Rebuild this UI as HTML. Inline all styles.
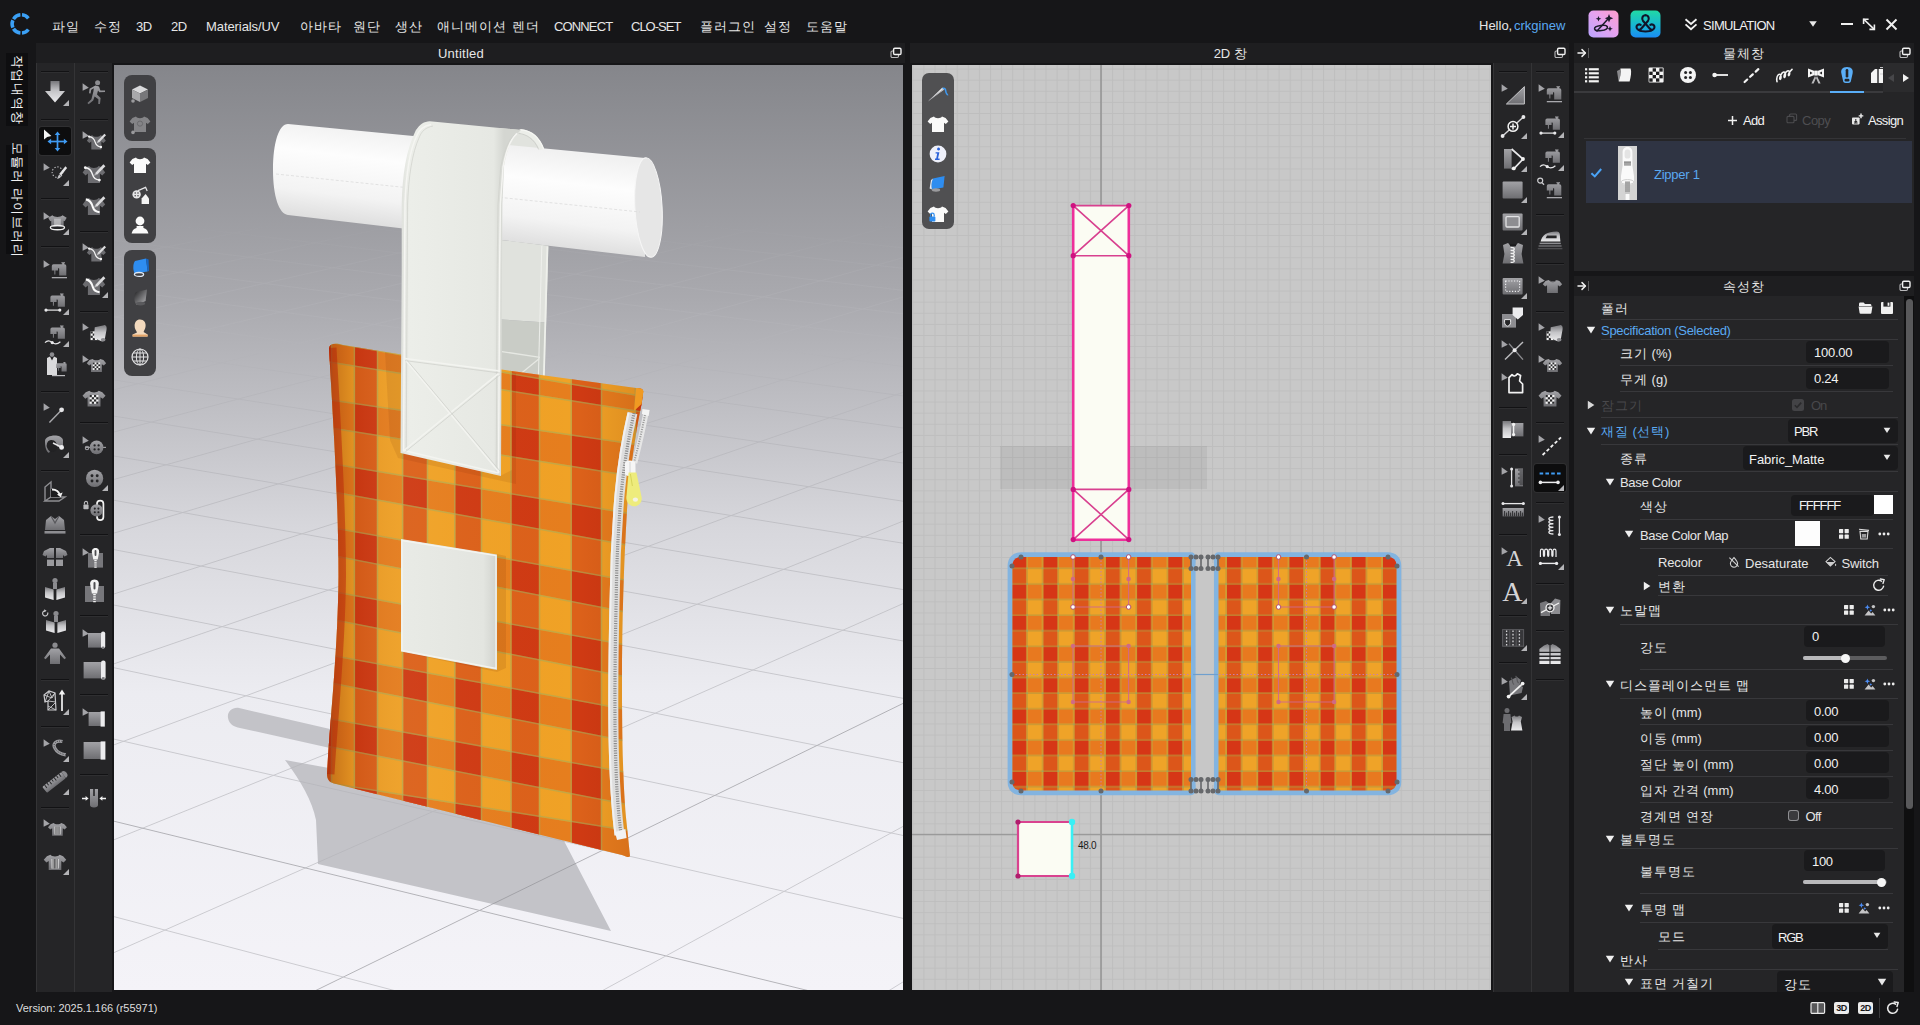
<!DOCTYPE html>
<html lang="ko"><head><meta charset="utf-8"><title>CLO</title>
<style>
html,body{margin:0;padding:0;background:#161618;overflow:hidden}
body{width:1920px;height:1025px;position:relative;overflow:hidden;font-family:"Liberation Sans",sans-serif;font-size:13px;color:#e6e6e6}
.t{position:absolute;white-space:nowrap;font-family:"Liberation Sans",sans-serif}
svg{display:block;overflow:hidden}
</style></head>
<body>
<svg width="0" height="0" style="position:absolute"><defs>
<linearGradient id="gI" x1="0" y1="0" x2="0" y2="1"><stop offset="0" stop-color="#a2a2a6"/><stop offset="1" stop-color="#6e6e72"/></linearGradient>
<linearGradient id="gW" x1="0" y1="0" x2="0" y2="1"><stop offset="0" stop-color="#77777b"/><stop offset=".45" stop-color="#c4c4c7"/><stop offset="1" stop-color="#ececee"/></linearGradient>
</defs></svg>
<!-- top bar, titles, status -->
<svg style="position:absolute;left:8px;top:11px" width="26" height="26" viewBox="0 0 26 26"><g fill="none" stroke="#3ba0f5" stroke-width="3.5"><path d="M20.37 7.30 A9.1 9.1 0 0 0 13.99 3.83"/><path d="M12.41 3.83 A9.1 9.1 0 0 0 5.48 8.08"/><path d="M4.89 9.20 A9.1 9.1 0 0 0 4.89 16.60"/><path d="M5.48 17.72 A9.1 9.1 0 0 0 12.41 21.97"/><path d="M13.99 21.97 A9.1 9.1 0 0 0 20.37 18.50"/></g></svg>
<span class="t" style="top:17.0px;line-height:19px;font-size:13px;color:#e6e6e6;left:52px;"><span style="letter-spacing:1.00px">파일</span></span>
<span class="t" style="top:17.0px;line-height:19px;font-size:13px;color:#e6e6e6;left:94px;"><span style="letter-spacing:1.00px">수정</span></span>
<span class="t" style="top:17.0px;line-height:19px;font-size:13px;color:#e6e6e6;left:136px;letter-spacing:-0.50px;">3D</span>
<span class="t" style="top:17.0px;line-height:19px;font-size:13px;color:#e6e6e6;left:171px;letter-spacing:-0.50px;">2D</span>
<span class="t" style="top:17.0px;line-height:19px;font-size:13px;color:#e6e6e6;left:206px;letter-spacing:-0.08px;">Materials/UV</span>
<span class="t" style="top:17.0px;line-height:19px;font-size:13px;color:#e6e6e6;left:300px;"><span style="letter-spacing:1.00px">아바타</span></span>
<span class="t" style="top:17.0px;line-height:19px;font-size:13px;color:#e6e6e6;left:353px;"><span style="letter-spacing:1.00px">원단</span></span>
<span class="t" style="top:17.0px;line-height:19px;font-size:13px;color:#e6e6e6;left:395px;"><span style="letter-spacing:1.00px">생산</span></span>
<span class="t" style="top:17.0px;line-height:19px;font-size:13px;color:#e6e6e6;left:437px;"><span style="letter-spacing:1.00px">애니메이션</span></span>
<span class="t" style="top:17.0px;line-height:19px;font-size:13px;color:#e6e6e6;left:512px;"><span style="letter-spacing:1.00px">렌더</span></span>
<span class="t" style="top:17.0px;line-height:19px;font-size:13px;color:#e6e6e6;left:554px;letter-spacing:-0.86px;">CONNECT</span>
<span class="t" style="top:17.0px;line-height:19px;font-size:13px;color:#e6e6e6;left:631px;letter-spacing:-1.00px;">CLO-SET</span>
<span class="t" style="top:17.0px;line-height:19px;font-size:13px;color:#e6e6e6;left:700px;"><span style="letter-spacing:1.00px">플러그인</span></span>
<span class="t" style="top:17.0px;line-height:19px;font-size:13px;color:#e6e6e6;left:764px;"><span style="letter-spacing:1.00px">설정</span></span>
<span class="t" style="top:17.0px;line-height:19px;font-size:13px;color:#e6e6e6;left:806px;"><span style="letter-spacing:1.00px">도움말</span></span>
<span class="t" style="top:16.0px;line-height:19px;font-size:13px;color:#e6e6e6;left:1479px;">Hello,</span>
<span class="t" style="top:16.0px;line-height:19px;font-size:13px;color:#5aa9f2;left:1514px;">crkginew</span>
<svg style="position:absolute;left:1588px;top:10px" width="31" height="28" viewBox="0 0 31 28">
<defs><linearGradient id="gA" x1="0" y1="1" x2="1" y2="0"><stop offset="0" stop-color="#b9a4ff"/><stop offset=".55" stop-color="#e7a2ee"/><stop offset="1" stop-color="#ff9ecb"/></linearGradient></defs>
<rect x=".5" y=".5" width="30" height="27" rx="5" fill="url(#gA)"/>
<g stroke="#1b1b2a" stroke-width="1.5" fill="none" stroke-linecap="round">
<path d="M9 21 L19.5 9.5"/><ellipse cx="13" cy="18" rx="6.5" ry="2.6" transform="rotate(-8 13 18)"/></g>
<g fill="#1b1b2a"><path d="M21 4 l1.2 3 3 1.2 -3 1.2 -1.2 3 -1.2 -3 -3 -1.2 3 -1.2z"/><path d="M10.5 6 l.8 2 2 .8 -2 .8 -.8 2 -.8 -2 -2 -.8 2 -.8z"/><path d="M22 16 l.8 2 2 .8 -2 .8 -.8 2 -.8 -2 -2 -.8 2 -.8z"/></g></svg>
<svg style="position:absolute;left:1630px;top:10px" width="31" height="28" viewBox="0 0 31 28">
<defs><linearGradient id="gB" x1="0" y1="0" x2="0" y2="1"><stop offset="0" stop-color="#21d9a4"/><stop offset=".55" stop-color="#17b6d2"/><stop offset="1" stop-color="#1b8bf4"/></linearGradient></defs>
<rect x=".5" y=".5" width="30" height="27" rx="5" fill="url(#gB)"/>
<g stroke="#10142a" stroke-width="2.1" fill="none" stroke-linecap="round" stroke-linejoin="round">
<path d="M15.5 5.2 c-3.2 0 -4.2 3.6 -2.4 5.8 l6.8 7.8 c1.6 1.9 4.6 .9 4.6 -1.7 c0 -2.3 -2.4 -3.3 -4.2 -2.3"/>
<path d="M15.5 5.2 c3.2 0 4.2 3.6 2.4 5.8 l-6.8 7.8 c-1.6 1.9 -4.6 .9 -4.6 -1.7 c0 -2.3 2.4 -3.3 4.2 -2.3"/>
<path d="M9.2 20.3 c2 1.6 10.6 1.6 12.6 0"/></g></svg>
<svg style="position:absolute;left:1683px;top:16px" width="16" height="16" viewBox="0 0 16 16"><g fill="none" stroke="#f2f2f2" stroke-width="1.8" stroke-linejoin="miter"><path d="M2.5 3.2 L8 8 L13.5 3.2"/><path d="M2.5 8.4 L8 13.2 L13.5 8.4"/></g></svg>
<span class="t" style="top:16.0px;line-height:19px;font-size:13px;color:#f0f0f0;left:1703px;letter-spacing:-0.70px;">SIMULATION</span>
<svg style="position:absolute;left:1808px;top:20px" width="10" height="8" viewBox="0 0 10 8"><path d="M1.2 1.2h7.6L5 6.8z" fill="#e8e8e8"/></svg>
<div style="position:absolute;left:1841px;top:23px;width:12px;height:2px;background:#f0f0f0"></div>
<svg style="position:absolute;left:1861px;top:17px" width="16" height="15" viewBox="0 0 16 15"><g stroke="#f0f0f0" stroke-width="1.6" fill="none" stroke-linecap="square"><path d="M3 2.5 L13 12"/><path d="M2.6 6.2 V2.2 H6.8"/><path d="M13.4 8.2 V12.4 H9.2"/></g></svg>
<svg style="position:absolute;left:1885px;top:18px" width="13" height="13" viewBox="0 0 13 13"><g stroke="#f0f0f0" stroke-width="1.9" stroke-linecap="butt"><path d="M1.5 1.5 L11.5 11.5"/><path d="M11.5 1.5 L1.5 11.5"/></g></svg>
<div style="position:absolute;left:6px;top:53px;width:22px;height:73px;background:#0e0e10;"></div>
<div style="position:absolute;left:6px;top:145px;width:22px;height:109px;background:#0e0e10;"></div>
<span class="t" style="left:17px;top:89.5px;font-size:13px;letter-spacing:1px;line-height:16px;transform:translate(-50%,-50%) rotate(90deg);color:#f2f2f2">작업내역창</span>
<span class="t" style="left:17px;top:199.5px;font-size:13px;letter-spacing:1px;line-height:16px;transform:translate(-50%,-50%) rotate(90deg);color:#f2f2f2">모듈러 라이브러리</span>
<div style="position:absolute;left:36px;top:43px;width:869px;height:20px;background:#1e1e20;"></div>
<span class="t" style="top:44.0px;line-height:19px;font-size:13px;color:#e6e6e6;left:361px;width:200px;text-align:center;letter-spacing:0.25px;">Untitled</span>
<div style="position:absolute;left:910px;top:43px;width:659px;height:20px;background:#1e1e20;"></div>
<span class="t" style="top:44.0px;line-height:19px;font-size:13px;color:#e6e6e6;left:1130.5px;width:200px;text-align:center;">2D <span style="letter-spacing:0.50px">창</span></span>
<div style="position:absolute;left:1574px;top:43px;width:340px;height:20px;background:#1e1e20;"></div>
<span class="t" style="top:44.0px;line-height:19px;font-size:13px;color:#e6e6e6;left:1643.5px;width:200px;text-align:center;"><span style="letter-spacing:1.00px">물체창</span></span>
<div style="position:absolute;left:1574px;top:276px;width:340px;height:20px;background:#1e1e20;"></div>
<span class="t" style="top:276.5px;line-height:19px;font-size:13px;color:#e6e6e6;left:1643.5px;width:200px;text-align:center;"><span style="letter-spacing:1.00px">속성창</span></span>
<svg style="position:absolute;left:890px;top:47px" width="12" height="12" viewBox="0 0 12 12"><g fill="none" stroke-linejoin="round"><rect x="1" y="4" width="7.5" height="6.5" rx="1.2" stroke="#b9b9bb" stroke-width="1.1"/><rect x="3.6" y="1.3" width="7.4" height="6.2" rx="1.2" fill="#1e1e20" stroke="#f2f2f2" stroke-width="1.4"/></g></svg>
<svg style="position:absolute;left:1554px;top:47px" width="12" height="12" viewBox="0 0 12 12"><g fill="none" stroke-linejoin="round"><rect x="1" y="4" width="7.5" height="6.5" rx="1.2" stroke="#b9b9bb" stroke-width="1.1"/><rect x="3.6" y="1.3" width="7.4" height="6.2" rx="1.2" fill="#1e1e20" stroke="#f2f2f2" stroke-width="1.4"/></g></svg>
<svg style="position:absolute;left:1899px;top:47px" width="12" height="12" viewBox="0 0 12 12"><g fill="none" stroke-linejoin="round"><rect x="1" y="4" width="7.5" height="6.5" rx="1.2" stroke="#b9b9bb" stroke-width="1.1"/><rect x="3.6" y="1.3" width="7.4" height="6.2" rx="1.2" fill="#1e1e20" stroke="#f2f2f2" stroke-width="1.4"/></g></svg>
<svg style="position:absolute;left:1899px;top:280px" width="12" height="12" viewBox="0 0 12 12"><g fill="none" stroke-linejoin="round"><rect x="1" y="4" width="7.5" height="6.5" rx="1.2" stroke="#b9b9bb" stroke-width="1.1"/><rect x="3.6" y="1.3" width="7.4" height="6.2" rx="1.2" fill="#1e1e20" stroke="#f2f2f2" stroke-width="1.4"/></g></svg>
<svg style="position:absolute;left:1577px;top:47px" width="14" height="12" viewBox="0 0 14 12"><g stroke="#f2f2f2" stroke-width="1.5" fill="none" stroke-linecap="round" stroke-linejoin="round"><path d="M1 6 H8"/><path d="M5 2.6 L8.4 6 L5 9.4"/></g><path d="M11.5 1 V11" stroke="#5a5a5c" stroke-width="1"/></svg>
<svg style="position:absolute;left:1577px;top:280px" width="14" height="12" viewBox="0 0 14 12"><g stroke="#f2f2f2" stroke-width="1.5" fill="none" stroke-linecap="round" stroke-linejoin="round"><path d="M1 6 H8"/><path d="M5 2.6 L8.4 6 L5 9.4"/></g><path d="M11.5 1 V11" stroke="#5a5a5c" stroke-width="1"/></svg>
<span class="t" style="top:999.5px;line-height:17px;font-size:11px;color:#dedede;left:16px;letter-spacing:-0.04px;">Version: 2025.1.166 (r55971)</span>
<svg style="position:absolute;left:1810px;top:1001px" width="16" height="14" viewBox="0 0 16 14"><rect x="1" y="1.6" width="13.6" height="10.8" rx="1.2" fill="#58585a" stroke="#e8e8e8" stroke-width="1.2"/><path d="M7.8 1.6V12.4" stroke="#e8e8e8" stroke-width="1.2"/></svg>
<div style="position:absolute;left:1834px;top:1002px;width:15px;height:12px;background:#ececec;border-radius:2px"></div>
<span class="t" style="left:1834px;top:1002px;width:15px;text-align:center;font-size:9px;line-height:12px;font-weight:bold;color:#161618;letter-spacing:-.4px">3D</span>
<div style="position:absolute;left:1858px;top:1002px;width:15px;height:12px;background:#ececec;border-radius:2px"></div>
<span class="t" style="left:1858px;top:1002px;width:15px;text-align:center;font-size:9px;line-height:12px;font-weight:bold;color:#161618;letter-spacing:-.4px">2D</span>
<div style="position:absolute;left:1879px;top:998px;width:1px;height:20px;background:#3a3a3c"></div>
<svg style="position:absolute;left:1886px;top:1001px" width="14" height="14" viewBox="0 0 14 14"><path d="M11.6 8.2 A5 5 0 1 1 9.6 3.2" fill="none" stroke="#ececec" stroke-width="1.5" stroke-linecap="round"/><path d="M8.2 1 L12.2 1.6 L11 5.4" fill="none" stroke="#ececec" stroke-width="1.5" stroke-linecap="round" stroke-linejoin="round"/></svg>
<!-- tool bars -->
<div style="position:absolute;left:36px;top:63px;width:76px;height:929px;background:#252527;"></div>
<div style="position:absolute;left:36px;top:63px;width:1px;height:929px;background:#343436"></div>
<div style="position:absolute;left:74px;top:63px;width:1px;height:929px;background:#343436"></div>
<div style="position:absolute;left:1493px;top:63px;width:76px;height:929px;background:#252527;"></div>
<div style="position:absolute;left:1493px;top:63px;width:1px;height:929px;background:#343436"></div>
<div style="position:absolute;left:1531px;top:63px;width:1px;height:929px;background:#343436"></div>
<div style="position:absolute;left:41px;top:71px;width:28px;height:1px;background:#121214"></div><div style="position:absolute;left:41px;top:72px;width:28px;height:1px;background:#2f2f31"></div>
<div style="position:absolute;left:41px;top:119px;width:28px;height:1px;background:#121214"></div><div style="position:absolute;left:41px;top:120px;width:28px;height:1px;background:#2f2f31"></div>
<div style="position:absolute;left:41px;top:198px;width:28px;height:1px;background:#121214"></div><div style="position:absolute;left:41px;top:199px;width:28px;height:1px;background:#2f2f31"></div>
<div style="position:absolute;left:41px;top:246px;width:28px;height:1px;background:#121214"></div><div style="position:absolute;left:41px;top:247px;width:28px;height:1px;background:#2f2f31"></div>
<div style="position:absolute;left:41px;top:391px;width:28px;height:1px;background:#121214"></div><div style="position:absolute;left:41px;top:392px;width:28px;height:1px;background:#2f2f31"></div>
<div style="position:absolute;left:41px;top:470px;width:28px;height:1px;background:#121214"></div><div style="position:absolute;left:41px;top:471px;width:28px;height:1px;background:#2f2f31"></div>
<div style="position:absolute;left:41px;top:679px;width:28px;height:1px;background:#121214"></div><div style="position:absolute;left:41px;top:680px;width:28px;height:1px;background:#2f2f31"></div>
<div style="position:absolute;left:41px;top:726px;width:28px;height:1px;background:#121214"></div><div style="position:absolute;left:41px;top:727px;width:28px;height:1px;background:#2f2f31"></div>
<div style="position:absolute;left:41px;top:807px;width:28px;height:1px;background:#121214"></div><div style="position:absolute;left:41px;top:808px;width:28px;height:1px;background:#2f2f31"></div>
<svg style="position:absolute;left:39px;top:77px" width="32" height="32" viewBox="0 0 32 32"><path d="M11.5 4 H20.5 V14 H26 L16 25.5 L6 14 H11.5Z" fill="url(#gW)"/><path d="M30 23 V29 H24Z" fill="#b4b4b7"/></svg>
<div style="position:absolute;left:39px;top:127px;width:32px;height:28px;background:#0d0d0e;border-radius:3px;box-shadow:0 0 0 1px #2f2f31"></div><svg style="position:absolute;left:39px;top:125px" width="32" height="32" viewBox="0 0 32 32"><path d="M5 4.5 l0 10 l3.2 -2.6 l4.2 -1z" fill="#f4f4f4"/><g stroke="#3f9bf3" stroke-width="1.7" fill="none"><path d="M18.5 9 V24"/><path d="M11 16.5 H26"/></g><g fill="#3f9bf3"><path d="M18.5 6.5 l2.8 3.6 h-5.6z"/><path d="M18.5 26.5 l2.8 -3.6 h-5.6z"/><path d="M8.5 16.5 l3.6 -2.8 v5.6z"/><path d="M28.5 16.5 l-3.6 -2.8 v5.6z"/></g></svg>
<svg style="position:absolute;left:39px;top:157px" width="32" height="32" viewBox="0 0 32 32"><path d="M4.6 6.2 v7.6 l6.2 -3z" fill="#a4a4a8"/><g transform="translate(5 2.6) scale(.84)"><circle cx="16" cy="15" r="6.3" fill="none" stroke="#bdbdc0" stroke-width="1.3" stroke-dasharray="1.6 2"/><path d="M25.5 8 L27.5 10 L20.5 19 L18 17.2Z" fill="#e4e4e6"/><path d="M18 17.6 l2.4 1.8 c-.8 2.6 -3 3.6 -5.2 3.2 c1.6 -1 1.4 -3.2 2.8 -5z" fill="#c4c4c7"/></g><path d="M30 23 V29 H24Z" fill="#b4b4b7"/></svg>
<svg style="position:absolute;left:39px;top:206px" width="32" height="32" viewBox="0 0 32 32"><path d="M4.6 6.2 v7.6 l6.2 -3z" fill="#a4a4a8"/><g transform="translate(5 2.6) scale(.84)"><path d="M10 8 C12 10.5 20 10.5 22 8 L27 11 L24.6 15 L23.4 14.4 V22 H8.6 V14.4 L7.4 15 L5 11Z" fill="url(#gI)"/><path d="M12 12 h8 v8 h-8z" fill="#d8d8da" opacity=".55"/><ellipse cx="16" cy="22.6" rx="8.4" ry="2.6" fill="none" stroke="#f0f0f0" stroke-width="1.6"/></g><path d="M30 23 V29 H24Z" fill="#b4b4b7"/></svg>
<svg style="position:absolute;left:39px;top:254px" width="32" height="32" viewBox="0 0 32 32"><path d="M4.6 6.2 v7.6 l6.2 -3z" fill="#a4a4a8"/><g transform="translate(0 0) scale(1.0)"><path d="M12.8 11.9 Q12.8 10.2 14.5 10.2 H23.2 V9.2 H22.4 V8.2 H26 V9.2 H25.2 V10.2 H25.6 Q27.3 10.2 27.3 11.9 V21.4 H20.2 V14.8 Q20.2 14.2 19.6 14.2 H19 V16.6 H16.4 V20.4 H15.3 V16.6 H12.8Z" fill="url(#gI)"/></g><rect x="12.8" y="23" width="15.2" height="1.3" fill="#a9a9ad"/></svg>
<svg style="position:absolute;left:39px;top:286px" width="32" height="32" viewBox="0 0 32 32"><g transform="translate(-1.4 -0.6) scale(1.0)"><path d="M12.8 11.9 Q12.8 10.2 14.5 10.2 H23.2 V9.2 H22.4 V8.2 H26 V9.2 H25.2 V10.2 H25.6 Q27.3 10.2 27.3 11.9 V21.4 H20.2 V14.8 Q20.2 14.2 19.6 14.2 H19 V16.6 H16.4 V20.4 H15.3 V16.6 H12.8Z" fill="url(#gI)"/></g><g fill="#e8e8ea"><rect x="7" y="23.5" width="14" height="1.2"/><circle cx="7" cy="24.1" r="1.6"/><circle cx="20.8" cy="24.1" r="1.6"/></g><path d="M30 23 V29 H24Z" fill="#b4b4b7"/></svg>
<svg style="position:absolute;left:39px;top:318px" width="32" height="32" viewBox="0 0 32 32"><g transform="translate(-1.4 -0.6) scale(1.0)"><path d="M12.8 11.9 Q12.8 10.2 14.5 10.2 H23.2 V9.2 H22.4 V8.2 H26 V9.2 H25.2 V10.2 H25.6 Q27.3 10.2 27.3 11.9 V21.4 H20.2 V14.8 Q20.2 14.2 19.6 14.2 H19 V16.6 H16.4 V20.4 H15.3 V16.6 H12.8Z" fill="url(#gI)"/></g><path d="M6 24.6 c2.4 -2.6 4.6 -2.2 7 -.2 s5.4 2 8.4 -.6" fill="none" stroke="#e8e8ea" stroke-width="1.2"/><circle cx="13.2" cy="24.6" r="1.6" fill="#e8e8ea"/><path d="M30 23 V29 H24Z" fill="#b4b4b7"/></svg>
<svg style="position:absolute;left:39px;top:350px" width="32" height="32" viewBox="0 0 32 32"><path d="M8 8 l3 -1.5 l2 4 l2 -4 l3 1.5 v17 H8Z" fill="#dadadc"/><circle cx="13" cy="4.6" r="2.3" fill="#8b8b8f"/><g transform="translate(8 6) scale(.72)"><path d="M12.8 11.9 Q12.8 10.2 14.5 10.2 H23.2 V9.2 H22.4 V8.2 H26 V9.2 H25.2 V10.2 H25.6 Q27.3 10.2 27.3 11.9 V21.4 H20.2 V14.8 Q20.2 14.2 19.6 14.2 H19 V16.6 H16.4 V20.4 H15.3 V16.6 H12.8Z" fill="url(#gI)"/></g><rect x="13" y="25" width="13" height="1.2" fill="#bdbdc0"/></svg>
<svg style="position:absolute;left:39px;top:397px" width="32" height="32" viewBox="0 0 32 32"><path d="M4.6 6.2 v7.6 l6.2 -3z" fill="#a4a4a8"/><path d="M10.4 25.4 L22 13.4" stroke="#a9a9ad" stroke-width="1.4"/><circle cx="22.6" cy="12.8" r="2.4" fill="#e4e4e6"/></svg>
<svg style="position:absolute;left:39px;top:429px" width="32" height="32" viewBox="0 0 32 32"><path d="M6 12 C6 6 22 4 24 11 L24 18 C18 16 12 20 10 24 C7 22 6 18 6 12Z" fill="url(#gI)"/><ellipse cx="13" cy="17" rx="5.2" ry="6.2" fill="#222224" transform="rotate(-20 13 17)"/><path d="M14 14 L22 18" stroke="#e8e8ea" stroke-width="1.5"/><circle cx="22.6" cy="18.4" r="2.4" fill="#f0f0f2"/><path d="M30 23 V29 H24Z" fill="#b4b4b7"/></svg>
<svg style="position:absolute;left:39px;top:477px" width="32" height="32" viewBox="0 0 32 32"><path d="M6 24 L12 20 H26 L20 24Z" fill="none" stroke="#8e8e92" stroke-width="1.4"/><path d="M6 24 V10 L12 5 V20" fill="none" stroke="#8e8e92" stroke-width="1.4"/><path d="M12 12 H19 L21 20 H12Z" fill="#1b1b1d"/><path d="M13 12.5 c4 0 7 2 8 6" fill="none" stroke="#f2f2f2" stroke-width="1.8"/><path d="M23.6 15.6 l-1.8 4.6 l-3.8 -2.6z" fill="#f2f2f2"/></svg>
<svg style="position:absolute;left:39px;top:509px" width="32" height="32" viewBox="0 0 32 32"><path d="M7 11 L12 7 L16 10 L20 7 L25 11 L26 21 H6Z" fill="url(#gI)"/><path d="M12 7 L16 14 L20 7" fill="none" stroke="#58585c" stroke-width="1.3"/><path d="M5.5 22 H26.5 V24.6 H5.5Z" fill="#8d8d91"/></svg>
<svg style="position:absolute;left:39px;top:541px" width="32" height="32" viewBox="0 0 32 32"><path d="M11 7 L5 10 L3.5 14 L6.5 15.5 L8 14 V17 H15 V7Z" fill="url(#gI)"/><path d="M21 7 L27 10 L28.5 14 L25.5 15.5 L24 14 V17 H17 V7Z" fill="url(#gI)"/><rect x="8" y="18.6" width="7" height="6.4" fill="#9a9a9e"/><rect x="17" y="18.6" width="7" height="6.4" fill="#9a9a9e"/></svg>
<svg style="position:absolute;left:39px;top:574px" width="32" height="32" viewBox="0 0 32 32"><circle cx="16" cy="6.6" r="2.6" fill="#8b8b8f"/><path d="M14 9 h4 v6 h-4z" fill="#8b8b8f"/><path d="M6 13 L14.6 15.6 V26 L6 23.6Z" fill="url(#gW)"/><path d="M26 13 L17.4 15.6 V26 L26 23.6Z" fill="url(#gW)"/></svg>
<svg style="position:absolute;left:39px;top:606px" width="32" height="32" viewBox="0 0 32 32"><circle cx="17" cy="7.6" r="2.6" fill="#8b8b8f"/><path d="M15 10 h4 v6 h-4z" fill="#8b8b8f"/><path d="M7 14 L15.6 16.6 V27 L7 24.6Z" fill="url(#gW)"/><path d="M27 14 L18.4 16.6 V27 L27 24.6Z" fill="url(#gW)"/><path d="M8.6 6.4 a2.6 2.6 0 1 1 -2.4 -1.6" fill="none" stroke="#c8c8cb" stroke-width="1.2"/><path d="M5.2 3.2 l2.4 1.6 l-2.2 1.4z" fill="#c8c8cb"/></svg>
<svg style="position:absolute;left:39px;top:639px" width="32" height="32" viewBox="0 0 32 32"><circle cx="16" cy="6.2" r="2.6" fill="#8b8b8f"/><path d="M12 9.4 h8 L27 19 l-1.6 1.2 L21 15.4 V25 H11 V15.4 L6.6 20.2 L5 19Z" fill="url(#gI)"/></svg>
<svg style="position:absolute;left:39px;top:686px" width="32" height="32" viewBox="0 0 32 32"><path d="M5 9 L10 5 L16 7 L17 24 H9 V15 L6 16Z" fill="none" stroke="#c9c9cc" stroke-width="1.2"/><path d="M6 16 L10 5 M9 15 L16 7 M9 15 L17 16 M9 24 L17 16 M10 5 L13 12 L16 7 M9 20 L17 24 M5 9 L13 12" stroke="#c9c9cc" stroke-width=".9" fill="none"/><path d="M23 25 V8" stroke="#f2f2f2" stroke-width="1.7"/><path d="M23 3.6 l3.2 5 h-6.4z" fill="#f2f2f2"/><path d="M30 23 V29 H24Z" fill="#b4b4b7"/></svg>
<svg style="position:absolute;left:39px;top:733px" width="32" height="32" viewBox="0 0 32 32"><path d="M4.6 6.2 v7.6 l6.2 -3z" fill="#a4a4a8"/><g transform="translate(5 2.6) scale(.84)"><path d="M22 7 C14 5 10 10 13 15 C15 19 20 22 26 23" fill="none" stroke="#9b9b9f" stroke-width="3.8"/><path d="M22 7 C14 5 10 10 13 15 C15 19 20 22 26 23" fill="none" stroke="#2a2a2c" stroke-width="1.1" stroke-dasharray="1 1.8"/></g><path d="M30 23 V29 H24Z" fill="#b4b4b7"/></svg>
<svg style="position:absolute;left:39px;top:766px" width="32" height="32" viewBox="0 0 32 32"><g transform="rotate(-38 16 16)"><rect x="3" y="12" width="24" height="7.6" rx="1" fill="url(#gI)"/><path d="M6 12v3.6M9 12v2.6M12 12v3.6M15 12v2.6M18 12v3.6M21 12v2.6M24 12v3.6" stroke="#2a2a2c" stroke-width="1"/><path d="M27 12 a3.8 3.8 0 0 1 0 7.6" fill="#8b8b8f"/></g><path d="M30 23 V29 H24Z" fill="#b4b4b7"/></svg>
<svg style="position:absolute;left:39px;top:813px" width="32" height="32" viewBox="0 0 32 32"><path d="M4.6 6.2 v7.6 l6.2 -3z" fill="#a4a4a8"/><g transform="translate(5 2.6) scale(.84)"><path transform="translate(1.6 1.6) scale(0.9)" d="M11 8 L7 9.5 L3.5 13.5 L6.5 16.6 L9 15 V25 H23 V15 L25.5 16.6 L28.5 13.5 L25 9.5 L21 8 C19.8 10.4 12.2 10.4 11 8Z" fill="url(#gI)"/><rect x="12.6" y="13" width="7" height="9.6" fill="#f2f2f2"/><path d="M14 13v9.6M15.4 13v9.6M16.8 13v9.6M18.2 13v9.6" stroke="#2a2a2c" stroke-width=".8"/></g></svg>
<svg style="position:absolute;left:39px;top:846px" width="32" height="32" viewBox="0 0 32 32"><path transform="translate(1.6 1.6) scale(0.9)" d="M11 8 L7 9.5 L3.5 13.5 L6.5 16.6 L9 15 V25 H23 V15 L25.5 16.6 L28.5 13.5 L25 9.5 L21 8 C19.8 10.4 12.2 10.4 11 8Z" fill="url(#gI)"/><rect x="12.6" y="13" width="7" height="9.6" fill="#f2f2f2"/><path d="M14 13v9.6M15.4 13v9.6M16.8 13v9.6M18.2 13v9.6" stroke="#2a2a2c" stroke-width=".8"/><path d="M30 23 V29 H24Z" fill="#b4b4b7"/></svg>
<div style="position:absolute;left:80px;top:71px;width:28px;height:1px;background:#121214"></div><div style="position:absolute;left:80px;top:72px;width:28px;height:1px;background:#2f2f31"></div>
<div style="position:absolute;left:80px;top:119px;width:28px;height:1px;background:#121214"></div><div style="position:absolute;left:80px;top:120px;width:28px;height:1px;background:#2f2f31"></div>
<div style="position:absolute;left:80px;top:231px;width:28px;height:1px;background:#121214"></div><div style="position:absolute;left:80px;top:232px;width:28px;height:1px;background:#2f2f31"></div>
<div style="position:absolute;left:80px;top:311px;width:28px;height:1px;background:#121214"></div><div style="position:absolute;left:80px;top:312px;width:28px;height:1px;background:#2f2f31"></div>
<div style="position:absolute;left:80px;top:422px;width:28px;height:1px;background:#121214"></div><div style="position:absolute;left:80px;top:423px;width:28px;height:1px;background:#2f2f31"></div>
<div style="position:absolute;left:80px;top:534px;width:28px;height:1px;background:#121214"></div><div style="position:absolute;left:80px;top:535px;width:28px;height:1px;background:#2f2f31"></div>
<div style="position:absolute;left:80px;top:615px;width:28px;height:1px;background:#121214"></div><div style="position:absolute;left:80px;top:616px;width:28px;height:1px;background:#2f2f31"></div>
<div style="position:absolute;left:80px;top:694px;width:28px;height:1px;background:#121214"></div><div style="position:absolute;left:80px;top:695px;width:28px;height:1px;background:#2f2f31"></div>
<div style="position:absolute;left:80px;top:774px;width:28px;height:1px;background:#121214"></div><div style="position:absolute;left:80px;top:775px;width:28px;height:1px;background:#2f2f31"></div>
<svg style="position:absolute;left:78px;top:77px" width="32" height="32" viewBox="0 0 32 32"><path d="M4.6 6.2 v7.6 l6.2 -3z" fill="#a4a4a8"/><circle cx="19.6" cy="5.8" r="2.5" fill="#8d8d91"/><path d="M17.4 8.6 L21 9.6 L22.4 13.4 L27 13.6 L27 15 L21.4 15.2 L20 13.4 L19 17.6 L22.6 21 L22 27 L20.2 27 L20.4 22.2 L16.6 19.6 L15.2 23.4 L10.6 27.2 L9.4 26 L13.4 22.2 L15.4 14.6 L15.8 11.2 L13.2 12.8 L12.6 16.4 L11 16.2 L11.6 11.8Z" fill="url(#gI)"/></svg>
<svg style="position:absolute;left:78px;top:125px" width="32" height="32" viewBox="0 0 32 32"><path d="M4.6 6.2 v7.6 l6.2 -3z" fill="#a4a4a8"/><g transform="translate(5 2.6) scale(.84)"><path d="M11.2 9 L8.6 10 L4.6 15.6 L7.6 18.4 L9.9 16.6 V26 H21.9 V16.6 L24.2 18.4 L27.2 15.6 L23.2 10 L20.6 9 C19.6 11.6 12.2 11.6 11.2 9Z" fill="#6c6c70"/><path d="M7.3 10.7 C12 11 13.6 14 14.6 17.6 S17.6 22.6 21.4 23.1" fill="none" stroke="#f4f4f4" stroke-width="1.5"/><circle cx="7.3" cy="10.7" r="1.4" fill="#f4f4f4"/><circle cx="21.4" cy="23.1" r="1.4" fill="#f4f4f4"/><path d="M25.4 7.2 L27.4 9.2 L19 17.8 L17 16.2Z" fill="#dcdcde"/><path d="M17 16.2 L19 17.8 L16 18.8Z" fill="#b4b4b7"/></g></svg>
<svg style="position:absolute;left:78px;top:157px" width="32" height="32" viewBox="0 0 32 32"><path d="M11.2 9 L8.6 10 L4.6 15.6 L7.6 18.4 L9.9 16.6 V26 H21.9 V16.6 L24.2 18.4 L27.2 15.6 L23.2 10 L20.6 9 C19.6 11.6 12.2 11.6 11.2 9Z" fill="#6c6c70"/><path d="M7.3 10.7 C12 11 13.6 14 14.6 17.6 S17.6 22.6 21.4 23.1" fill="none" stroke="#f4f4f4" stroke-width="1.5"/><circle cx="7.3" cy="10.7" r="1.4" fill="#f4f4f4"/><circle cx="21.4" cy="23.1" r="1.4" fill="#f4f4f4"/><path d="M25.4 7.2 L27.4 9.2 L19 17.8 L17 16.2Z" fill="#dcdcde"/><path d="M17 16.2 L19 17.8 L16 18.8Z" fill="#b4b4b7"/></svg>
<svg style="position:absolute;left:78px;top:189px" width="32" height="32" viewBox="0 0 32 32"><path d="M11.2 9 L8.6 10 L4.6 15.6 L7.6 18.4 L9.9 16.6 V26 H21.9 V16.6 L24.2 18.4 L27.2 15.6 L23.2 10 L20.6 9 C19.6 11.6 12.2 11.6 11.2 9Z" fill="#6c6c70"/><path d="M7.8 10.4 C12.6 11 13.8 14.4 14.8 18 S17.8 22.8 21.6 23.2" fill="none" stroke="#fafafa" stroke-width="2.1"/><path d="M25.4 7.2 L27.4 9.2 L19 17.8 L17 16.2Z" fill="#dcdcde"/><path d="M17 16.2 L19 17.8 L16 18.8Z" fill="#b4b4b7"/></svg>
<svg style="position:absolute;left:78px;top:237px" width="32" height="32" viewBox="0 0 32 32"><path d="M4.6 6.2 v7.6 l6.2 -3z" fill="#a4a4a8"/><g transform="translate(5 2.6) scale(.84)"><path d="M11.2 9 L8.6 10 L4.6 15.6 L7.6 18.4 L9.9 16.6 V26 H21.9 V16.6 L24.2 18.4 L27.2 15.6 L23.2 10 L20.6 9 C19.6 11.6 12.2 11.6 11.2 9Z" fill="#6c6c70"/><path d="M7.3 10.7 C12 11 13.6 14 14.6 17.6 S17.6 22.6 21.4 23.1" fill="none" stroke="#f4f4f4" stroke-width="1.5"/><circle cx="7.3" cy="10.7" r="1.4" fill="#f4f4f4"/><circle cx="21.4" cy="23.1" r="1.4" fill="#f4f4f4"/><path d="M25.4 7.2 L27.4 9.2 L19 17.8 L17 16.2Z" fill="#dcdcde"/><path d="M17 16.2 L19 17.8 L16 18.8Z" fill="#b4b4b7"/></g></svg>
<svg style="position:absolute;left:78px;top:269px" width="32" height="32" viewBox="0 0 32 32"><path d="M11.2 9 L8.6 10 L4.6 15.6 L7.6 18.4 L9.9 16.6 V26 H21.9 V16.6 L24.2 18.4 L27.2 15.6 L23.2 10 L20.6 9 C19.6 11.6 12.2 11.6 11.2 9Z" fill="#6c6c70"/><path d="M7.8 10.4 C12.6 11 13.8 14.4 14.8 18 S17.8 22.8 21.6 23.2" fill="none" stroke="#fafafa" stroke-width="2.1"/><path d="M25.4 7.2 L27.4 9.2 L19 17.8 L17 16.2Z" fill="#dcdcde"/><path d="M17 16.2 L19 17.8 L16 18.8Z" fill="#b4b4b7"/><path d="M30 23 V29 H24Z" fill="#b4b4b7"/></svg>
<svg style="position:absolute;left:78px;top:317px" width="32" height="32" viewBox="0 0 32 32"><path d="M4.6 6.2 v7.6 l6.2 -3z" fill="#a4a4a8"/><g transform="translate(5 2.6) scale(.84)"><rect x="9" y="14" width="10.4" height="10.4" fill="#f4f4f4"/><rect x="9.0" y="14.0" width="2.6" height="2.6" fill="#2a2a2c"/><rect x="9.0" y="19.2" width="2.6" height="2.6" fill="#2a2a2c"/><rect x="11.6" y="16.6" width="2.6" height="2.6" fill="#2a2a2c"/><rect x="11.6" y="21.8" width="2.6" height="2.6" fill="#2a2a2c"/><rect x="14.2" y="14.0" width="2.6" height="2.6" fill="#2a2a2c"/><rect x="14.2" y="19.2" width="2.6" height="2.6" fill="#2a2a2c"/><rect x="16.8" y="16.6" width="2.6" height="2.6" fill="#2a2a2c"/><rect x="16.8" y="21.8" width="2.6" height="2.6" fill="#2a2a2c"/><path d="M14 9 L25 6.6 C27.6 6 28.6 9 28 12 L26 23 C25.4 25.6 23 26.4 21.4 25.6 L13 22 Z" fill="url(#gW)"/><ellipse cx="24" cy="24" rx="2.8" ry="2" fill="#8b8b8f"/></g></svg>
<svg style="position:absolute;left:78px;top:349px" width="32" height="32" viewBox="0 0 32 32"><path d="M4.6 6.2 v7.6 l6.2 -3z" fill="#a4a4a8"/><g transform="translate(5 2.6) scale(.84)"><path transform="translate(1.3 1.4) scale(0.92)" d="M11 8 L7 9.5 L3.5 13.5 L6.5 16.6 L9 15 V25 H23 V15 L25.5 16.6 L28.5 13.5 L25 9.5 L21 8 C19.8 10.4 12.2 10.4 11 8Z" fill="url(#gI)"/><rect x="11.6" y="13" width="8.8" height="8.8" fill="#f4f4f4"/><rect x="11.6" y="13.0" width="2.2" height="2.2" fill="#2a2a2c"/><rect x="11.6" y="17.4" width="2.2" height="2.2" fill="#2a2a2c"/><rect x="13.8" y="15.2" width="2.2" height="2.2" fill="#2a2a2c"/><rect x="13.8" y="19.6" width="2.2" height="2.2" fill="#2a2a2c"/><rect x="16.0" y="13.0" width="2.2" height="2.2" fill="#2a2a2c"/><rect x="16.0" y="17.4" width="2.2" height="2.2" fill="#2a2a2c"/><rect x="18.2" y="15.2" width="2.2" height="2.2" fill="#2a2a2c"/><rect x="18.2" y="19.6" width="2.2" height="2.2" fill="#2a2a2c"/></g></svg>
<svg style="position:absolute;left:78px;top:382px" width="32" height="32" viewBox="0 0 32 32"><path transform="translate(1.3 1.4) scale(0.92)" d="M11 8 L7 9.5 L3.5 13.5 L6.5 16.6 L9 15 V25 H23 V15 L25.5 16.6 L28.5 13.5 L25 9.5 L21 8 C19.8 10.4 12.2 10.4 11 8Z" fill="url(#gI)"/><rect x="11.6" y="13" width="8.8" height="8.8" fill="#f4f4f4"/><rect x="11.6" y="13.0" width="2.2" height="2.2" fill="#2a2a2c"/><rect x="11.6" y="17.4" width="2.2" height="2.2" fill="#2a2a2c"/><rect x="13.8" y="15.2" width="2.2" height="2.2" fill="#2a2a2c"/><rect x="13.8" y="19.6" width="2.2" height="2.2" fill="#2a2a2c"/><rect x="16.0" y="13.0" width="2.2" height="2.2" fill="#2a2a2c"/><rect x="16.0" y="17.4" width="2.2" height="2.2" fill="#2a2a2c"/><rect x="18.2" y="15.2" width="2.2" height="2.2" fill="#2a2a2c"/><rect x="18.2" y="19.6" width="2.2" height="2.2" fill="#2a2a2c"/></svg>
<svg style="position:absolute;left:78px;top:430px" width="32" height="32" viewBox="0 0 32 32"><path d="M4.6 6.2 v7.6 l6.2 -3z" fill="#a4a4a8"/><path d="M7 17.4 H28" stroke="#9c9ca0" stroke-width="1.2"/><circle cx="9" cy="18" r="1.7" fill="none" stroke="#9c9ca0" stroke-width="1.1"/><circle cx="18.6" cy="17.4" r="6.8" fill="url(#gI)"/><g fill="#252527"><circle cx="16.6" cy="15.4" r="1.15"/><circle cx="20.6" cy="15.4" r="1.15"/><circle cx="16.6" cy="19.4" r="1.15"/><circle cx="20.6" cy="19.4" r="1.15"/></g></svg>
<svg style="position:absolute;left:78px;top:462px" width="32" height="32" viewBox="0 0 32 32"><circle cx="16.6" cy="16.4" r="8.6" fill="url(#gI)"/><g fill="#252527"><circle cx="14" cy="13.8" r="1.45"/><circle cx="19.2" cy="13.8" r="1.45"/><circle cx="14" cy="19" r="1.45"/><circle cx="19.2" cy="19" r="1.45"/></g><path d="M30 23 V29 H24Z" fill="#b4b4b7"/></svg>
<svg style="position:absolute;left:78px;top:494px" width="32" height="32" viewBox="0 0 32 32"><rect x="5.4" y="10.6" width="5.2" height="4.6" rx=".8" fill="#b9b9bc"/><path d="M6.4 10.6 v-1.6 a1.6 1.6 0 0 1 3.2 0 v1.6" fill="none" stroke="#b9b9bc" stroke-width="1.1"/><rect x="19" y="6.6" width="6.4" height="19.6" rx="3.2" fill="none" stroke="#f2f2f2" stroke-width="1.7"/><circle cx="18.6" cy="16.4" r="6.2" fill="url(#gI)"/><g fill="#252527"><circle cx="16.8" cy="14.6" r="1.05"/><circle cx="20.4" cy="14.6" r="1.05"/><circle cx="16.8" cy="18.2" r="1.05"/><circle cx="20.4" cy="18.2" r="1.05"/></g></svg>
<svg style="position:absolute;left:78px;top:542px" width="32" height="32" viewBox="0 0 32 32"><path d="M4.6 6.2 v7.6 l6.2 -3z" fill="#a4a4a8"/><rect x="10" y="11" width="15" height="14.6" fill="#77777b"/><path d="M17.5 6 c-3 0 -4 2.4 -3.6 4.6 l1.4 7 h4.4 l1.4 -7 c.4 -2.2 -.6 -4.6 -3.6 -4.6z" fill="#f2f2f2"/><rect x="16.6" y="8" width="1.8" height="6" rx=".9" fill="#4d4d50"/><path d="M17.5 18v8" stroke="#f2f2f2" stroke-width="2.4" stroke-dasharray="1.2 1"/></svg>
<svg style="position:absolute;left:78px;top:575px" width="32" height="32" viewBox="0 0 32 32"><rect x="7" y="11" width="19" height="16" fill="#77777b"/><path d="M16.5 4.6 c-3.6 0 -4.8 2.8 -4.2 5.4 l1.6 8.4 h5.2 l1.6 -8.4 c.6 -2.6 -.6 -5.4 -4.2 -5.4z" fill="#f2f2f2"/><rect x="15.5" y="7" width="2" height="7.4" rx="1" fill="#4d4d50"/><path d="M16.5 19v8.4" stroke="#f2f2f2" stroke-width="2.6" stroke-dasharray="1.3 1"/></svg>
<svg style="position:absolute;left:78px;top:623px" width="32" height="32" viewBox="0 0 32 32"><path d="M4.6 6.2 v7.6 l6.2 -3z" fill="#a4a4a8"/><rect x="10" y="10" width="13.4" height="14.6" fill="url(#gI)"/><rect x="23" y="8.6" width="4.2" height="17" rx="2" fill="#ececee"/><ellipse cx="25.1" cy="24.4" rx="1.5" ry="1" fill="#7d7d81"/></svg>
<svg style="position:absolute;left:78px;top:653px" width="32" height="32" viewBox="0 0 32 32"><rect x="5.6" y="9" width="18" height="16.4" fill="url(#gI)"/><rect x="23" y="7.6" width="4.6" height="19" rx="2.2" fill="#ececee"/><ellipse cx="25.3" cy="25.2" rx="1.6" ry="1.1" fill="#7d7d81"/></svg>
<svg style="position:absolute;left:78px;top:702px" width="32" height="32" viewBox="0 0 32 32"><path d="M4.6 6.2 v7.6 l6.2 -3z" fill="#a4a4a8"/><rect x="10.6" y="10" width="12.6" height="14" fill="url(#gI)"/><rect x="22.6" y="9.4" width="4.2" height="15.2" fill="#ececee"/></svg>
<svg style="position:absolute;left:78px;top:734px" width="32" height="32" viewBox="0 0 32 32"><rect x="5.6" y="8" width="17.6" height="17" fill="url(#gI)"/><rect x="22.6" y="7.4" width="4.8" height="18.2" fill="#ececee"/></svg>
<svg style="position:absolute;left:78px;top:782px" width="32" height="32" viewBox="0 0 32 32"><path d="M12 7 h3.2 v7 h1.6 v-7 H20 V23 a4 2.4 0 0 1 -8 0Z" fill="url(#gI)"/><g stroke="#f2f2f2" stroke-width="1.5"><path d="M4 16.4h4.4M28 16.4h-4.4"/></g><path d="M10.6 16.4 l-3 -2.4 v4.8z M21.4 16.4 l3 -2.4 v4.8z" fill="#f2f2f2"/></svg>
<div style="position:absolute;left:1499px;top:71px;width:28px;height:1px;background:#121214"></div><div style="position:absolute;left:1499px;top:72px;width:28px;height:1px;background:#2f2f31"></div>
<div style="position:absolute;left:1499px;top:407px;width:28px;height:1px;background:#121214"></div><div style="position:absolute;left:1499px;top:408px;width:28px;height:1px;background:#2f2f31"></div>
<div style="position:absolute;left:1499px;top:454px;width:28px;height:1px;background:#121214"></div><div style="position:absolute;left:1499px;top:455px;width:28px;height:1px;background:#2f2f31"></div>
<div style="position:absolute;left:1499px;top:534px;width:28px;height:1px;background:#121214"></div><div style="position:absolute;left:1499px;top:535px;width:28px;height:1px;background:#2f2f31"></div>
<div style="position:absolute;left:1499px;top:615px;width:28px;height:1px;background:#121214"></div><div style="position:absolute;left:1499px;top:616px;width:28px;height:1px;background:#2f2f31"></div>
<div style="position:absolute;left:1499px;top:662px;width:28px;height:1px;background:#121214"></div><div style="position:absolute;left:1499px;top:663px;width:28px;height:1px;background:#2f2f31"></div>
<svg style="position:absolute;left:1497px;top:78px" width="32" height="32" viewBox="0 0 32 32"><path d="M4.6 6.2 v7.6 l6.2 -3z" fill="#a4a4a8"/><path d="M9.4 26 L27.4 8.6 V26Z" fill="url(#gI)" stroke="#c4c4c7" stroke-width="1"/></svg>
<svg style="position:absolute;left:1497px;top:110px" width="32" height="32" viewBox="0 0 32 32"><path d="M5.6 26 L26.4 7" stroke="#d8d8da" stroke-width="1.4"/><circle cx="5.6" cy="26" r="1.9" fill="#e8e8ea"/><circle cx="26.4" cy="7" r="1.9" fill="#e8e8ea"/><circle cx="16" cy="16.4" r="4.9" fill="#252527" stroke="#f2f2f2" stroke-width="1.5"/><path d="M16 13.4v6M13 16.4h6" stroke="#f2f2f2" stroke-width="1.5"/><path d="M30 23 V29 H24Z" fill="#b4b4b7"/></svg>
<svg style="position:absolute;left:1497px;top:143px" width="32" height="32" viewBox="0 0 32 32"><path d="M7 6 H14.6 V25.6 H7Z" fill="url(#gI)"/><path d="M14.6 6 L26 16 L17 25.6 H14.6" fill="none" stroke="#e8e8ea" stroke-width="1.7"/><circle cx="26" cy="16" r="1.9" fill="#f2f2f2"/><circle cx="16.8" cy="25.4" r="1.9" fill="#f2f2f2"/><path d="M30 23 V29 H24Z" fill="#b4b4b7"/></svg>
<svg style="position:absolute;left:1497px;top:174px" width="32" height="32" viewBox="0 0 32 32"><rect x="5.6" y="7.4" width="20" height="17" rx="1" fill="url(#gI)"/><path d="M30 23 V29 H24Z" fill="#b4b4b7"/></svg>
<svg style="position:absolute;left:1497px;top:206px" width="32" height="32" viewBox="0 0 32 32"><rect x="5.6" y="7.4" width="20" height="17" rx="1" fill="url(#gI)"/><rect x="9" y="10.6" width="13.2" height="10.4" rx="1" fill="#8d8d91" stroke="#e2e2e4" stroke-width="1.3"/><path d="M30 23 V29 H24Z" fill="#b4b4b7"/></svg>
<svg style="position:absolute;left:1497px;top:238px" width="32" height="32" viewBox="0 0 32 32"><path d="M6 7 L11 5 L14 8 H18 L21 5 L26 7 L24.6 16 L26.4 25.6 H5.6 L7.4 16Z" fill="url(#gI)"/><path d="M12.4 6.2 h7.2 l-1 2.2 h-5.2z" fill="#1b1b1d"/><path d="M13 10 c5 0 5 3 0 3 c5 0 5 3 0 3 c5 0 5 3 0 3 c5 0 5 3 0 3 c5 0 5 3 0 3" fill="none" stroke="#f2f2f2" stroke-width="1.1" transform="translate(.6 -.6)"/></svg>
<svg style="position:absolute;left:1497px;top:270px" width="32" height="32" viewBox="0 0 32 32"><rect x="5.6" y="8" width="20" height="16.4" rx="1" fill="url(#gI)"/><rect x="8.6" y="11" width="14" height="10.4" fill="none" stroke="#ececee" stroke-width="1.2" stroke-dasharray="1.2 1.6"/><path d="M30 23 V29 H24Z" fill="#b4b4b7"/></svg>
<svg style="position:absolute;left:1497px;top:302px" width="32" height="32" viewBox="0 0 32 32"><rect x="5" y="12" width="14" height="13.6" fill="#8d8d91"/><path d="M15.6 5.6 H26 V13 L20.8 17.6 L15.6 13Z" fill="#ececee"/><path d="M7.6 17.6 h6 v3 c0 2 -1.4 3 -3 3.6 c-1.6 -.6 -3 -1.6 -3 -3.6z" fill="#252527" stroke="#e8e8ea" stroke-width="1"/></svg>
<svg style="position:absolute;left:1497px;top:334px" width="32" height="32" viewBox="0 0 32 32"><path d="M4.6 6.2 v7.6 l6.2 -3z" fill="#a4a4a8"/><path d="M8 25.6 L26 8" stroke="#bdbdc0" stroke-width="1.4"/><path d="M12 9.6 L26 25.6" stroke="#8d8d91" stroke-width="1.4"/><circle cx="17.6" cy="16.2" r="2" fill="#ececee"/></svg>
<svg style="position:absolute;left:1497px;top:367px" width="32" height="32" viewBox="0 0 32 32"><path d="M4.6 6.2 v7.6 l6.2 -3z" fill="#a4a4a8"/><path d="M12 10.6 L15 7.6 C16.6 9.6 18.6 9.6 20.4 6.8 L23.6 8.4 L22.6 14 L25.6 17 V25.6 H12Z" fill="none" stroke="#f2f2f2" stroke-width="1.7" stroke-linejoin="round"/></svg>
<svg style="position:absolute;left:1497px;top:413px" width="32" height="32" viewBox="0 0 32 32"><path d="M5.6 8 H14 V25 H5.6Z" fill="url(#gW)"/><path d="M14 10 H26.4 V23.4 H14Z" fill="url(#gI)"/><path d="M16.6 11.6V21.4" stroke="#f2f2f2" stroke-width="1.4"/><circle cx="16.6" cy="11.4" r="1.6" fill="#f2f2f2"/><circle cx="16.6" cy="21.6" r="1.6" fill="#f2f2f2"/></svg>
<svg style="position:absolute;left:1497px;top:461px" width="32" height="32" viewBox="0 0 32 32"><path d="M4.6 6.2 v7.6 l6.2 -3z" fill="#a4a4a8"/><path d="M14.6 8V25" stroke="#e8e8ea" stroke-width="1.3"/><circle cx="14.6" cy="8" r="1.5" fill="#e8e8ea"/><circle cx="14.6" cy="25" r="1.5" fill="#e8e8ea"/><rect x="18" y="7.6" width="8" height="17.8" fill="url(#gI)"/><path d="M21 9h5M22.6 11h3.4M21 13h5M22.6 15h3.4M21 17h5M22.6 19h3.4M21 21h5M22.6 23h3.4" stroke="#252527" stroke-width=".9"/></svg>
<svg style="position:absolute;left:1497px;top:494px" width="32" height="32" viewBox="0 0 32 32"><path d="M6 9.6H26.4" stroke="#e8e8ea" stroke-width="1.3"/><circle cx="6" cy="9.6" r="1.5" fill="#e8e8ea"/><circle cx="26.4" cy="9.6" r="1.5" fill="#e8e8ea"/><rect x="5.6" y="14" width="21.2" height="8.4" fill="url(#gI)"/><path d="M7.6 17v5.4M9.6 18.6v3.8M11.6 17v5.4M13.6 18.6v3.8M15.6 17v5.4M17.6 18.6v3.8M19.6 17v5.4M21.6 18.6v3.8M23.6 17v5.4M25.4 18.6v3.8" stroke="#252527" stroke-width=".9"/></svg>
<svg style="position:absolute;left:1497px;top:541px" width="32" height="32" viewBox="0 0 32 32"><path d="M4.6 6.2 v7.6 l6.2 -3z" fill="#a4a4a8"/><text x="17.6" y="25.4" font-family="Liberation Serif,serif" font-size="23" fill="#d4d4d6" text-anchor="middle">A</text></svg>
<svg style="position:absolute;left:1497px;top:575px" width="32" height="32" viewBox="0 0 32 32"><text x="15.4" y="25.6" font-family="Liberation Serif,serif" font-size="28" fill="#d4d4d6" text-anchor="middle">A</text><path d="M30 23 V29 H24Z" fill="#b4b4b7"/></svg>
<svg style="position:absolute;left:1497px;top:622px" width="32" height="32" viewBox="0 0 32 32"><rect x="5.6" y="7.6" width="21" height="16.6" fill="#37373a" stroke="#5a5a5e" stroke-width="1"/><path d="M9.6 8.4V24M16 8.4V24M22.4 8.4V24" stroke="#d4d4d6" stroke-width="1.3" stroke-dasharray="1.6 1.8"/><path d="M12.8 8V24.4M19.2 8V24.4" stroke="#5a5a5e" stroke-width="1"/><path d="M30 23 V29 H24Z" fill="#b4b4b7"/></svg>
<svg style="position:absolute;left:1497px;top:671px" width="32" height="32" viewBox="0 0 32 32"><path d="M4.6 6.2 v7.6 l6.2 -3z" fill="#a4a4a8"/><path d="M12 10 L20 6 L24 9 L22.6 13.6 L26 16 L24.6 22 L13 24.6Z" fill="#77777b"/><path d="M14 6.6 c3 2.6 0 4.6 3 7 M18.6 5 c3 2.6 0 4.6 3 7" fill="none" stroke="#59595c" stroke-width="1.2"/><path d="M11.6 25.6 L25.6 12.6" stroke="#f2f2f2" stroke-width="1.8"/><circle cx="11.6" cy="25.6" r="1.9" fill="#f2f2f2"/><circle cx="25.6" cy="12.6" r="1.9" fill="#f2f2f2"/><path d="M30 23 V29 H24Z" fill="#b4b4b7"/></svg>
<svg style="position:absolute;left:1497px;top:704px" width="32" height="32" viewBox="0 0 32 32"><circle cx="10" cy="6.6" r="2.5" fill="#6c6c70"/><path d="M6.6 10 h6.8 l1 9 l-1.4 .4 V27 H7 V19.4 L5.6 19Z" fill="#6c6c70"/><path d="M14.6 13 l3 -1.6 c1 1.6 3.4 1.6 4.4 0 l3 1.6 l-1.2 4.6 l1.6 9 H14 l1.6 -9z" fill="url(#gW)"/></svg>
<div style="position:absolute;left:1536px;top:71px;width:28px;height:1px;background:#121214"></div><div style="position:absolute;left:1536px;top:72px;width:28px;height:1px;background:#2f2f31"></div>
<div style="position:absolute;left:1536px;top:214px;width:28px;height:1px;background:#121214"></div><div style="position:absolute;left:1536px;top:215px;width:28px;height:1px;background:#2f2f31"></div>
<div style="position:absolute;left:1536px;top:263px;width:28px;height:1px;background:#121214"></div><div style="position:absolute;left:1536px;top:264px;width:28px;height:1px;background:#2f2f31"></div>
<div style="position:absolute;left:1536px;top:311px;width:28px;height:1px;background:#121214"></div><div style="position:absolute;left:1536px;top:312px;width:28px;height:1px;background:#2f2f31"></div>
<div style="position:absolute;left:1536px;top:422px;width:28px;height:1px;background:#121214"></div><div style="position:absolute;left:1536px;top:423px;width:28px;height:1px;background:#2f2f31"></div>
<div style="position:absolute;left:1536px;top:502px;width:28px;height:1px;background:#121214"></div><div style="position:absolute;left:1536px;top:503px;width:28px;height:1px;background:#2f2f31"></div>
<div style="position:absolute;left:1536px;top:583px;width:28px;height:1px;background:#121214"></div><div style="position:absolute;left:1536px;top:584px;width:28px;height:1px;background:#2f2f31"></div>
<div style="position:absolute;left:1536px;top:630px;width:28px;height:1px;background:#121214"></div><div style="position:absolute;left:1536px;top:631px;width:28px;height:1px;background:#2f2f31"></div>
<div style="position:absolute;left:1536px;top:679px;width:28px;height:1px;background:#121214"></div><div style="position:absolute;left:1536px;top:680px;width:28px;height:1px;background:#2f2f31"></div>
<svg style="position:absolute;left:1534px;top:78px" width="32" height="32" viewBox="0 0 32 32"><path d="M4.6 6.2 v7.6 l6.2 -3z" fill="#a4a4a8"/><g transform="translate(0 0) scale(1.0)"><path d="M12.8 11.9 Q12.8 10.2 14.5 10.2 H23.2 V9.2 H22.4 V8.2 H26 V9.2 H25.2 V10.2 H25.6 Q27.3 10.2 27.3 11.9 V21.4 H20.2 V14.8 Q20.2 14.2 19.6 14.2 H19 V16.6 H16.4 V20.4 H15.3 V16.6 H12.8Z" fill="url(#gI)"/></g><rect x="12.8" y="23" width="15.2" height="1.3" fill="#a9a9ad"/></svg>
<svg style="position:absolute;left:1534px;top:109px" width="32" height="32" viewBox="0 0 32 32"><g transform="translate(-1.4 -0.6) scale(1.0)"><path d="M12.8 11.9 Q12.8 10.2 14.5 10.2 H23.2 V9.2 H22.4 V8.2 H26 V9.2 H25.2 V10.2 H25.6 Q27.3 10.2 27.3 11.9 V21.4 H20.2 V14.8 Q20.2 14.2 19.6 14.2 H19 V16.6 H16.4 V20.4 H15.3 V16.6 H12.8Z" fill="url(#gI)"/></g><g fill="#e8e8ea"><rect x="7" y="23.5" width="14" height="1.2"/><circle cx="7" cy="24.1" r="1.6"/><circle cx="20.8" cy="24.1" r="1.6"/></g><path d="M30 23 V29 H24Z" fill="#b4b4b7"/></svg>
<svg style="position:absolute;left:1534px;top:142px" width="32" height="32" viewBox="0 0 32 32"><g transform="translate(-1.4 -0.6) scale(1.0)"><path d="M12.8 11.9 Q12.8 10.2 14.5 10.2 H23.2 V9.2 H22.4 V8.2 H26 V9.2 H25.2 V10.2 H25.6 Q27.3 10.2 27.3 11.9 V21.4 H20.2 V14.8 Q20.2 14.2 19.6 14.2 H19 V16.6 H16.4 V20.4 H15.3 V16.6 H12.8Z" fill="url(#gI)"/></g><path d="M6 24.6 c2.4 -2.6 4.6 -2.2 7 -.2 s5.4 2 8.4 -.6" fill="none" stroke="#e8e8ea" stroke-width="1.2"/><circle cx="13.2" cy="24.6" r="1.6" fill="#e8e8ea"/><path d="M30 23 V29 H24Z" fill="#b4b4b7"/></svg>
<svg style="position:absolute;left:1534px;top:174px" width="32" height="32" viewBox="0 0 32 32"><g transform="translate(0 0) scale(1.0)"><path d="M12.8 11.9 Q12.8 10.2 14.5 10.2 H23.2 V9.2 H22.4 V8.2 H26 V9.2 H25.2 V10.2 H25.6 Q27.3 10.2 27.3 11.9 V21.4 H20.2 V14.8 Q20.2 14.2 19.6 14.2 H19 V16.6 H16.4 V20.4 H15.3 V16.6 H12.8Z" fill="url(#gI)"/></g><rect x="12.8" y="23" width="15.2" height="1.3" fill="#a9a9ad"/><circle cx="6.2" cy="6.6" r="2.5" fill="none" stroke="#cfcfd2" stroke-width="1.2"/><path d="M8 8.6 L10 10.8" stroke="#cfcfd2" stroke-width="1.3"/></svg>
<svg style="position:absolute;left:1534px;top:222px" width="32" height="32" viewBox="0 0 32 32"><path d="M6.6 19.6 C8 12.6 13 9.6 22.6 9.4 C24.6 9.4 25.6 10.6 25.8 12.6 L26.4 19.6Z" fill="url(#gW)"/><path d="M13 13.6 h9.6 v2.6 h-11z" fill="#252527"/><path d="M5.6 21.4H26.8" stroke="#8d8d91" stroke-width="1.5"/><path d="M4.6 24H27.6" stroke="#6c6c70" stroke-width="1.5"/><path d="M3.8 26.6H28.4" stroke="#4d4d50" stroke-width="1.4"/></svg>
<svg style="position:absolute;left:1534px;top:270px" width="32" height="32" viewBox="0 0 32 32"><path d="M4.6 6.2 v7.6 l6.2 -3z" fill="#a4a4a8"/><g transform="translate(5 2.6) scale(.84)"><path transform="translate(1.3 1.4) scale(0.92)" d="M11 8 L7 9.5 L3.5 13.5 L6.5 16.6 L9 15 V25 H23 V15 L25.5 16.6 L28.5 13.5 L25 9.5 L21 8 C19.8 10.4 12.2 10.4 11 8Z" fill="url(#gI)"/><path d="M12.4 9 c1.6 2.6 6.6 2.6 8.2 0" fill="none" stroke="#4d4d50" stroke-width="1"/></g></svg>
<svg style="position:absolute;left:1534px;top:317px" width="32" height="32" viewBox="0 0 32 32"><path d="M4.6 6.2 v7.6 l6.2 -3z" fill="#a4a4a8"/><g transform="translate(5 2.6) scale(.84)"><rect x="9" y="14" width="10.4" height="10.4" fill="#f4f4f4"/><rect x="9.0" y="14.0" width="2.6" height="2.6" fill="#2a2a2c"/><rect x="9.0" y="19.2" width="2.6" height="2.6" fill="#2a2a2c"/><rect x="11.6" y="16.6" width="2.6" height="2.6" fill="#2a2a2c"/><rect x="11.6" y="21.8" width="2.6" height="2.6" fill="#2a2a2c"/><rect x="14.2" y="14.0" width="2.6" height="2.6" fill="#2a2a2c"/><rect x="14.2" y="19.2" width="2.6" height="2.6" fill="#2a2a2c"/><rect x="16.8" y="16.6" width="2.6" height="2.6" fill="#2a2a2c"/><rect x="16.8" y="21.8" width="2.6" height="2.6" fill="#2a2a2c"/><path d="M14 9 L25 6.6 C27.6 6 28.6 9 28 12 L26 23 C25.4 25.6 23 26.4 21.4 25.6 L13 22 Z" fill="url(#gW)"/><ellipse cx="24" cy="24" rx="2.8" ry="2" fill="#8b8b8f"/></g></svg>
<svg style="position:absolute;left:1534px;top:349px" width="32" height="32" viewBox="0 0 32 32"><path d="M4.6 6.2 v7.6 l6.2 -3z" fill="#a4a4a8"/><g transform="translate(5 2.6) scale(.84)"><path transform="translate(1.3 1.4) scale(0.92)" d="M11 8 L7 9.5 L3.5 13.5 L6.5 16.6 L9 15 V25 H23 V15 L25.5 16.6 L28.5 13.5 L25 9.5 L21 8 C19.8 10.4 12.2 10.4 11 8Z" fill="url(#gI)"/><rect x="11.6" y="13" width="8.8" height="8.8" fill="#f4f4f4"/><rect x="11.6" y="13.0" width="2.2" height="2.2" fill="#2a2a2c"/><rect x="11.6" y="17.4" width="2.2" height="2.2" fill="#2a2a2c"/><rect x="13.8" y="15.2" width="2.2" height="2.2" fill="#2a2a2c"/><rect x="13.8" y="19.6" width="2.2" height="2.2" fill="#2a2a2c"/><rect x="16.0" y="13.0" width="2.2" height="2.2" fill="#2a2a2c"/><rect x="16.0" y="17.4" width="2.2" height="2.2" fill="#2a2a2c"/><rect x="18.2" y="15.2" width="2.2" height="2.2" fill="#2a2a2c"/><rect x="18.2" y="19.6" width="2.2" height="2.2" fill="#2a2a2c"/></g></svg>
<svg style="position:absolute;left:1534px;top:382px" width="32" height="32" viewBox="0 0 32 32"><path transform="translate(1.3 1.4) scale(0.92)" d="M11 8 L7 9.5 L3.5 13.5 L6.5 16.6 L9 15 V25 H23 V15 L25.5 16.6 L28.5 13.5 L25 9.5 L21 8 C19.8 10.4 12.2 10.4 11 8Z" fill="url(#gI)"/><rect x="11.6" y="13" width="8.8" height="8.8" fill="#f4f4f4"/><rect x="11.6" y="13.0" width="2.2" height="2.2" fill="#2a2a2c"/><rect x="11.6" y="17.4" width="2.2" height="2.2" fill="#2a2a2c"/><rect x="13.8" y="15.2" width="2.2" height="2.2" fill="#2a2a2c"/><rect x="13.8" y="19.6" width="2.2" height="2.2" fill="#2a2a2c"/><rect x="16.0" y="13.0" width="2.2" height="2.2" fill="#2a2a2c"/><rect x="16.0" y="17.4" width="2.2" height="2.2" fill="#2a2a2c"/><rect x="18.2" y="15.2" width="2.2" height="2.2" fill="#2a2a2c"/><rect x="18.2" y="19.6" width="2.2" height="2.2" fill="#2a2a2c"/></svg>
<svg style="position:absolute;left:1534px;top:429px" width="32" height="32" viewBox="0 0 32 32"><path d="M4.6 6.2 v7.6 l6.2 -3z" fill="#a4a4a8"/><path d="M8.6 26 L27 8.4" stroke="#f2f2f2" stroke-width="1.8" stroke-dasharray="3.4 2.2"/></svg>
<div style="position:absolute;left:1534px;top:464px;width:32px;height:28px;background:#0d0d0e;border-radius:3px;box-shadow:0 0 0 1px #2f2f31"></div><svg style="position:absolute;left:1534px;top:462px" width="32" height="32" viewBox="0 0 32 32"><path d="M5.6 11.4H27" stroke="#3f9bf3" stroke-width="2" stroke-dasharray="3.6 2.2"/><path d="M6.4 20.4H24" stroke="#ececee" stroke-width="1.5"/><circle cx="6.4" cy="20.4" r="1.8" fill="#ececee"/><circle cx="24" cy="20.4" r="1.8" fill="#ececee"/><path d="M30 23 V29 H24Z" fill="#b4b4b7"/></svg>
<svg style="position:absolute;left:1534px;top:509px" width="32" height="32" viewBox="0 0 32 32"><path d="M4.6 6.2 v7.6 l6.2 -3z" fill="#a4a4a8"/><path d="M18 8 c-6 0 -6 3.4 0 3.4 c-6 0 -6 3.4 0 3.4 c-6 0 -6 3.4 0 3.4 c-6 0 -6 3.4 0 3.4 c-6 0 -6 3.4 0 3.4" fill="none" stroke="#e8e8ea" stroke-width="1.4" transform="translate(1.4 0)"/><path d="M25.4 8V25.4" stroke="#e8e8ea" stroke-width="1.3"/><circle cx="25.4" cy="8" r="1.5" fill="#e8e8ea"/><circle cx="25.4" cy="25.4" r="1.5" fill="#e8e8ea"/></svg>
<svg style="position:absolute;left:1534px;top:541px" width="32" height="32" viewBox="0 0 32 32"><path d="M5.6 16 V10 c0 -2.4 3 -2.4 3 0 V14 c0 2 1.2 2 1.2 0 V10 c0 -2.4 3 -2.4 3 0 V14 c0 2 1.2 2 1.2 0 V10 c0 -2.4 3 -2.4 3 0 V14 c0 2 1.2 2 1.2 0 V10 c0 -2.4 3 -2.4 3 0 V16" fill="none" stroke="#ececee" stroke-width="1.2" transform="translate(.8 0)"/><path d="M6.4 22.4H22.6" stroke="#ececee" stroke-width="1.4"/><circle cx="6.4" cy="22.4" r="1.6" fill="#ececee"/><circle cx="22.6" cy="22.4" r="1.6" fill="#ececee"/><path d="M30 23 V29 H24Z" fill="#b4b4b7"/></svg>
<svg style="position:absolute;left:1534px;top:591px" width="32" height="32" viewBox="0 0 32 32"><path d="M6 12 L12 10 L16 13 V25 H6.6Z" fill="#77777b"/><path d="M17 12 L21 7.6 L26.4 9 L26 23 H17Z" fill="#8d8d91"/><path d="M7 21.6 L25 12" stroke="#f2f2f2" stroke-width="1.3"/><circle cx="16" cy="16.8" r="4" fill="#3a3a3d" stroke="#f2f2f2" stroke-width="1.3"/><path d="M16 14.6v4.4M13.8 16.8h4.4" stroke="#f2f2f2" stroke-width="1.2"/></svg>
<svg style="position:absolute;left:1534px;top:639px" width="32" height="32" viewBox="0 0 32 32"><path d="M10 6.6 L13.6 5 L16 7 L18.4 5 L22 6.6 L26.6 10 V25 H5.4 V10Z" fill="url(#gW)"/><path d="M5 13.4H27M5 17.2H27M5 21H27" stroke="#252527" stroke-width="1.4"/><path d="M16 7V25" stroke="#252527" stroke-width="1.1"/></svg>
<!-- 3D window -->
<svg style="position:absolute;left:114px;top:65px" width="789" height="925" viewBox="114 65 789 925">
<defs>
<linearGradient id="bg3" x1="0" y1="0" x2="0" y2="1"><stop offset="0" stop-color="#85868b"/><stop offset=".25" stop-color="#a9a9ae"/><stop offset=".5" stop-color="#d7d7dc"/><stop offset=".68" stop-color="#ececf1"/><stop offset="1" stop-color="#f4f3f8"/></linearGradient>
<linearGradient id="gfade" x1="0" y1="0" x2="0" y2="1"><stop offset=".17" stop-color="#000"/><stop offset=".29" stop-color="#fff"/></linearGradient>
<mask id="mgrid" maskUnits="userSpaceOnUse" x="114" y="65" width="789" height="925"><rect x="114" y="65" width="789" height="925" fill="url(#gfade)"/></mask>
<linearGradient id="cyl" gradientUnits="userSpaceOnUse" x1="460" y1="140" x2="448" y2="238"><stop offset="0" stop-color="#f1f1f1"/><stop offset=".3" stop-color="#fdfdfd"/><stop offset=".7" stop-color="#f3f3f3"/><stop offset="1" stop-color="#dcdcdc"/></linearGradient>
<linearGradient id="strapF" gradientUnits="userSpaceOnUse" x1="401" y1="0" x2="504" y2="0"><stop offset="0" stop-color="#dfe1dc"/><stop offset=".08" stop-color="#eceee9"/><stop offset=".9" stop-color="#e6e8e3"/><stop offset="1" stop-color="#d4d6d1"/></linearGradient>
<linearGradient id="strapB" gradientUnits="userSpaceOnUse" x1="0" y1="240" x2="0" y2="386"><stop offset="0" stop-color="#e3e5e0"/><stop offset=".5" stop-color="#d6d8d3"/><stop offset=".56" stop-color="#c3c6c0"/><stop offset="1" stop-color="#c9ccc6"/></linearGradient>
<linearGradient id="bagsh" gradientUnits="userSpaceOnUse" x1="327" y1="0" x2="643" y2="0"><stop offset="0" stop-color="#7a1a00" stop-opacity=".38"/><stop offset=".09" stop-color="#7a1a00" stop-opacity=".1"/><stop offset=".3" stop-color="#fff" stop-opacity=".03"/><stop offset=".8" stop-color="#7a1a00" stop-opacity="0"/><stop offset="1" stop-color="#7a1a00" stop-opacity=".16"/></linearGradient>
<linearGradient id="patchg" gradientUnits="userSpaceOnUse" x1="400" y1="0" x2="498" y2="0"><stop offset="0" stop-color="#e9ebe6"/><stop offset=".85" stop-color="#e3e5e0"/><stop offset="1" stop-color="#cfd1cc"/></linearGradient>
<clipPath id="bagclip"><path d="M329 348 C330 343 336 343 343 345 L398 354 L505 370 L636 388 C641 388 644 389 643 393 L641.6 404 C636 430 630 470 627 510 C624 560 622 620 622 680 C622 740 623 790 626.6 823 L630 856 C629 858 627 857 622 855 L336 784 C330 783 327 780 327 774 C330 720 338 650 338.5 576 C338.5 500 333 420 329 348Z"/></clipPath>
</defs>
<rect x="114" y="65" width="789" height="925" fill="url(#bg3)"/>
<g fill="#c3c3c8">
<path d="M239 708 C232 707 227 712 228 718 C229 724 234 727 240 728 L330 748 L330 729 Z"/>
<path d="M285 760 L329 768 L336 784 L563 839 L611 931 L318 864 L316 820 C312 800 300 780 285 760Z"/>
</g>
<g mask="url(#mgrid)" stroke-width="1" fill="none" opacity=".62"><path d="M822.7 -160.4L-362782.2 30064.1" stroke="#b4b4b9"/>
<path d="M-947.5 -148.1L38979.0 2178.2" stroke="#b4b4b9"/>
<path d="M852.0 -159.3L-356079.9 30086.0" stroke="#b4b4b9"/>
<path d="M-981.3 -146.5L42790.8 2446.0" stroke="#b4b4b9"/>
<path d="M881.6 -158.2L-349377.6 30107.9" stroke="#b4b4b9"/>
<path d="M-1015.6 -144.8L47507.3 2777.3" stroke="#b4b4b9"/>
<path d="M911.6 -157.1L-342675.3 30129.8" stroke="#b4b4b9"/>
<path d="M-1050.6 -143.0L53494.2 3197.8" stroke="#b4b4b9"/>
<path d="M941.9 -155.9L-335973.0 30151.7" stroke="#b4b4b9"/>
<path d="M-1086.2 -141.3L61344.3 3749.1" stroke="#b4b4b9"/>
<path d="M972.4 -154.8L-329270.6 30173.6" stroke="#b4b4b9"/>
<path d="M-1122.3 -139.5L72087.9 4503.7" stroke="#b4b4b9"/>
<path d="M1003.4 -153.6L-322568.3 30195.6" stroke="#b4b4b9"/>
<path d="M-1159.2 -137.7L87686.1 5599.3" stroke="#b4b4b9"/>
<path d="M1034.6 -152.4L-315866.0 30217.5" stroke="#b4b4b9"/>
<path d="M-1196.6 -135.8L112390.0 7334.5" stroke="#b4b4b9"/>
<path d="M1066.2 -151.2L-309163.7 30239.4" stroke="#b4b4b9"/>
<path d="M-1234.8 -134.0L157459.0 10500.0" stroke="#b4b4b9"/>
<path d="M1098.2 -150.0L-302461.4 30261.3" stroke="#b4b4b9"/>
<path d="M-1273.6 -132.0L265734.5 18105.0" stroke="#b4b4b9"/>
<path d="M1130.5 -148.8L-295759.0 30283.2" stroke="#b4b4b9"/>
<path d="M-1313.2 -130.1L471385.1 32792.0" stroke="#b4b4b9"/>
<path d="M1163.1 -147.6L-289056.7 30305.2" stroke="#b4b4b9"/>
<path d="M-1353.5 -128.1L461531.9 32759.8" stroke="#b4b4b9"/>
<path d="M1196.1 -146.3L-282354.4 30327.1" stroke="#b4b4b9"/>
<path d="M-1394.5 -126.1L451678.7 32727.6" stroke="#b4b4b9"/>
<path d="M1229.5 -145.1L-275652.1 30349.0" stroke="#b4b4b9"/>
<path d="M-1436.4 -124.0L441825.5 32695.4" stroke="#b4b4b9"/>
<path d="M1263.3 -143.8L-268949.8 30370.9" stroke="#b4b4b9"/>
<path d="M-1479.0 -121.9L431972.3 32663.2" stroke="#b4b4b9"/>
<path d="M1297.4 -142.5L-262247.5 30392.8" stroke="#b4b4b9"/>
<path d="M-1522.4 -119.8L422119.1 32630.9" stroke="#b4b4b9"/>
<path d="M1331.9 -141.2L-255545.1 30414.8" stroke="#b4b4b9"/>
<path d="M-1566.6 -117.6L412266.0 32598.7" stroke="#b4b4b9"/>
<path d="M1366.9 -139.9L-248842.8 30436.7" stroke="#b4b4b9"/>
<path d="M-1611.8 -115.3L402412.8 32566.5" stroke="#b4b4b9"/>
<path d="M1402.2 -138.6L-242140.5 30458.6" stroke="#b4b4b9"/>
<path d="M-1657.8 -113.1L392559.6 32534.3" stroke="#b4b4b9"/>
<path d="M1437.9 -137.2L-235438.2 30480.5" stroke="#b4b4b9"/>
<path d="M-1704.7 -110.8L382706.4 32502.0" stroke="#b4b4b9"/>
<path d="M1474.1 -135.9L-228735.9 30502.4" stroke="#b4b4b9"/>
<path d="M-1752.6 -108.4L372853.2 32469.8" stroke="#b4b4b9"/>
<path d="M1510.7 -134.5L-222033.5 30524.3" stroke="#b4b4b9"/>
<path d="M-1801.5 -106.0L363000.0 32437.6" stroke="#b4b4b9"/>
<path d="M1547.7 -133.1L-215331.2 30546.3" stroke="#b4b4b9"/>
<path d="M-1851.4 -103.5L353146.8 32405.4" stroke="#b4b4b9"/>
<path d="M1585.1 -131.7L-208628.9 30568.2" stroke="#b4b4b9"/>
<path d="M-1902.3 -101.0L343293.6 32373.1" stroke="#b4b4b9"/>
<path d="M1623.0 -130.3L-201926.6 30590.1" stroke="#b4b4b9"/>
<path d="M-1954.2 -98.4L333440.4 32340.9" stroke="#b4b4b9"/>
<path d="M1661.3 -128.8L-195224.3 30612.0" stroke="#b4b4b9"/>
<path d="M-2007.3 -95.8L323587.2 32308.7" stroke="#b4b4b9"/>
<path d="M1700.2 -127.4L-188521.9 30633.9" stroke="#b4b4b9"/>
<path d="M-2061.5 -93.1L313734.0 32276.5" stroke="#b4b4b9"/>
<path d="M1739.4 -125.9L-181819.6 30655.9" stroke="#b4b4b9"/>
<path d="M-2116.9 -90.4L303880.8 32244.3" stroke="#b4b4b9"/>
<path d="M1779.2 -124.4L-175117.3 30677.8" stroke="#b4b4b9"/>
<path d="M-2173.5 -87.6L294027.6 32212.0" stroke="#b4b4b9"/>
<path d="M1819.4 -122.9L-168415.0 30699.7" stroke="#b4b4b9"/>
<path d="M-2231.4 -84.8L284174.5 32179.8" stroke="#b4b4b9"/>
<path d="M1860.2 -121.3L-161712.7 30721.6" stroke="#b4b4b9"/>
<path d="M-2290.5 -81.8L274321.3 32147.6" stroke="#b4b4b9"/>
<path d="M1901.4 -119.8L-155010.3 30743.5" stroke="#b4b4b9"/>
<path d="M-2351.0 -78.8L264468.1 32115.4" stroke="#b4b4b9"/>
<path d="M1943.2 -118.2L-148308.0 30765.5" stroke="#b4b4b9"/>
<path d="M-2412.9 -75.8L254614.9 32083.1" stroke="#b4b4b9"/>
<path d="M1985.5 -116.6L-141605.7 30787.4" stroke="#b4b4b9"/>
<path d="M-2476.2 -72.7L244761.7 32050.9" stroke="#b4b4b9"/>
<path d="M2028.3 -115.0L-134903.4 30809.3" stroke="#b4b4b9"/>
<path d="M-2541.0 -69.5L234908.5 32018.7" stroke="#b4b4b9"/>
<path d="M2071.7 -113.4L-128201.1 30831.2" stroke="#b4b4b9"/>
<path d="M-2607.3 -66.2L225055.3 31986.5" stroke="#b4b4b9"/>
<path d="M2115.6 -111.7L-121498.8 30853.1" stroke="#b4b4b9"/>
<path d="M-2675.3 -62.8L215202.1 31954.2" stroke="#b4b4b9"/>
<path d="M2160.1 -110.1L-114796.4 30875.0" stroke="#b4b4b9"/>
<path d="M-2744.8 -59.4L205348.9 31922.0" stroke="#b4b4b9"/>
<path d="M2205.2 -108.4L-108094.1 30897.0" stroke="#b4b4b9"/>
<path d="M-2816.1 -55.9L195495.7 31889.8" stroke="#b4b4b9"/>
<path d="M2250.9 -106.6L-101391.8 30918.9" stroke="#b4b4b9"/>
<path d="M-2889.2 -52.3L185642.5 31857.6" stroke="#b4b4b9"/>
<path d="M2297.2 -104.9L-94689.5 30940.8" stroke="#b4b4b9"/>
<path d="M-2964.1 -48.6L175789.3 31825.4" stroke="#b4b4b9"/>
<path d="M2344.0 -103.1L-87987.2 30962.7" stroke="#b4b4b9"/>
<path d="M-3041.0 -44.8L165936.1 31793.1" stroke="#b4b4b9"/>
<path d="M2391.6 -101.3L-81284.8 30984.6" stroke="#b4b4b9"/>
<path d="M-3119.8 -40.9L156083.0 31760.9" stroke="#b4b4b9"/>
<path d="M2439.7 -99.5L-74582.5 31006.6" stroke="#b4b4b9"/>
<path d="M-3200.7 -36.9L146229.8 31728.7" stroke="#b4b4b9"/>
<path d="M2488.5 -97.7L-67880.2 31028.5" stroke="#b4b4b9"/>
<path d="M-3283.7 -32.8L136376.6 31696.5" stroke="#b4b4b9"/>
<path d="M2538.0 -95.8L-61177.9 31050.4" stroke="#8e8e93"/>
<path d="M-3369.0 -28.6L126523.4 31664.2" stroke="#8e8e93"/>
<path d="M2588.1 -93.9L-54475.6 31072.3" stroke="#b4b4b9"/>
<path d="M-3456.6 -24.3L116670.2 31632.0" stroke="#b4b4b9"/>
<path d="M2639.0 -92.0L-47773.2 31094.2" stroke="#b4b4b9"/>
<path d="M-3546.6 -19.8L106817.0 31599.8" stroke="#b4b4b9"/>
<path d="M2690.5 -90.1L-41070.9 31116.2" stroke="#b4b4b9"/>
<path d="M-3639.1 -15.3L96963.8 31567.6" stroke="#b4b4b9"/>
<path d="M2742.8 -88.1L-34368.6 31138.1" stroke="#b4b4b9"/>
<path d="M-3734.3 -10.6L87110.6 31535.3" stroke="#b4b4b9"/>
<path d="M2795.8 -86.1L-27666.3 31160.0" stroke="#b4b4b9"/>
<path d="M-3832.2 -5.7L77257.4 31503.1" stroke="#b4b4b9"/>
<path d="M2849.5 -84.1L-20964.0 31181.9" stroke="#b4b4b9"/>
<path d="M-3933.0 -0.7L67404.2 31470.9" stroke="#b4b4b9"/>
<path d="M2904.1 -82.1L-14261.6 31203.8" stroke="#b4b4b9"/>
<path d="M-4036.8 4.4L57551.0 31438.7" stroke="#b4b4b9"/>
<path d="M2959.4 -80.0L-7559.3 31225.7" stroke="#b4b4b9"/>
<path d="M-4143.8 9.7L47697.8 31406.5" stroke="#b4b4b9"/>
<path d="M3015.5 -77.9L-857.0 31247.7" stroke="#b4b4b9"/>
<path d="M-4254.0 15.1L37844.6 31374.2" stroke="#b4b4b9"/>
<path d="M3072.4 -75.7L5845.3 31269.6" stroke="#b4b4b9"/>
<path d="M-4367.6 20.7L27991.5 31342.0" stroke="#b4b4b9"/>
<path d="M3130.2 -73.5L12547.6 31291.5" stroke="#b4b4b9"/>
<path d="M-4484.9 26.5L18138.3 31309.8" stroke="#b4b4b9"/>
<path d="M3188.8 -71.3L19250.0 31313.4" stroke="#b4b4b9"/>
<path d="M-4605.9 32.5L8285.1 31277.6" stroke="#b4b4b9"/>
<path d="M3248.3 -69.1L25952.3 31335.3" stroke="#b4b4b9"/>
<path d="M-4730.8 38.6L-1568.1 31245.3" stroke="#b4b4b9"/>
<path d="M3308.7 -66.8L32654.6 31357.3" stroke="#b4b4b9"/>
<path d="M-4859.9 45.0L-11421.3 31213.1" stroke="#b4b4b9"/>
<path d="M3370.1 -64.5L39356.9 31379.2" stroke="#b4b4b9"/>
<path d="M-4993.3 51.6L-21274.5 31180.9" stroke="#b4b4b9"/>
<path d="M3432.3 -62.2L46059.2 31401.1" stroke="#b4b4b9"/>
<path d="M-5131.4 58.4L-31127.7 31148.7" stroke="#b4b4b9"/>
<path d="M3495.5 -59.8L52761.5 31423.0" stroke="#b4b4b9"/>
<path d="M-5274.2 65.5L-40980.9 31116.4" stroke="#b4b4b9"/>
<path d="M3559.7 -57.4L59463.9 31444.9" stroke="#b4b4b9"/>
<path d="M-5422.2 72.8L-50834.1 31084.2" stroke="#b4b4b9"/>
<path d="M3625.0 -54.9L66166.2 31466.9" stroke="#b4b4b9"/>
<path d="M-5575.5 80.3L-60687.3 31052.0" stroke="#b4b4b9"/>
<path d="M3691.2 -52.4L72868.5 31488.8" stroke="#b4b4b9"/>
<path d="M-5734.4 88.2L-70540.5 31019.8" stroke="#b4b4b9"/>
<path d="M3758.5 -49.9L79570.8 31510.7" stroke="#b4b4b9"/>
<path d="M-5899.3 96.3L-80393.7 30987.6" stroke="#b4b4b9"/>
<path d="M3826.8 -47.3L86273.1 31532.6" stroke="#b4b4b9"/>
<path d="M-6070.5 104.8L-90246.9 30955.3" stroke="#b4b4b9"/>
<path d="M3896.3 -44.7L92975.5 31554.5" stroke="#b4b4b9"/>
<path d="M-6248.4 113.6L-100100.0 30923.1" stroke="#b4b4b9"/>
<path d="M3966.9 -42.0L99677.8 31576.4" stroke="#b4b4b9"/>
<path d="M-6433.4 122.7L-109953.2 30890.9" stroke="#b4b4b9"/>
<path d="M4038.7 -39.3L106380.1 31598.4" stroke="#b4b4b9"/>
<path d="M-6625.9 132.2L-119806.4 30858.7" stroke="#b4b4b9"/>
<path d="M4111.6 -36.6L113082.4 31620.3" stroke="#b4b4b9"/>
<path d="M-6826.3 142.1L-129659.6 30826.4" stroke="#b4b4b9"/>
<path d="M4185.8 -33.8L119784.7 31642.2" stroke="#b4b4b9"/>
<path d="M-7035.3 152.4L-139512.8 30794.2" stroke="#b4b4b9"/>
<path d="M4261.2 -31.0L126487.1 31664.1" stroke="#b4b4b9"/>
<path d="M-7253.2 163.2L-149366.0 30762.0" stroke="#b4b4b9"/>
<path d="M4337.9 -28.1L133189.4 31686.0" stroke="#b4b4b9"/>
<path d="M-7480.9 174.4L-159219.2 30729.8" stroke="#b4b4b9"/>
<path d="M4415.9 -25.1L139891.7 31708.0" stroke="#b4b4b9"/>
<path d="M-7718.7 186.2L-169072.4 30697.5" stroke="#b4b4b9"/>
<path d="M4495.3 -22.2L146594.0 31729.9" stroke="#b4b4b9"/>
<path d="M-7967.6 198.4L-178925.6 30665.3" stroke="#b4b4b9"/>
<path d="M4576.0 -19.1L153296.3 31751.8" stroke="#b4b4b9"/>
<path d="M-8228.3 211.3L-188778.8 30633.1" stroke="#b4b4b9"/>
<path d="M4658.2 -16.0L159998.7 31773.7" stroke="#b4b4b9"/>
<path d="M-8501.6 224.8L-198632.0 30600.9" stroke="#b4b4b9"/>
<path d="M4741.8 -12.9L166701.0 31795.6" stroke="#b4b4b9"/>
<path d="M-8788.5 239.0L-208485.2 30568.7" stroke="#b4b4b9"/>
<path d="M4826.9 -9.7L173403.3 31817.6" stroke="#b4b4b9"/>
<path d="M-9090.0 253.9L-218338.3 30536.4" stroke="#b4b4b9"/>
<path d="M4913.6 -6.4L180105.6 31839.5" stroke="#b4b4b9"/>
<path d="M-9407.3 269.5L-228191.5 30504.2" stroke="#b4b4b9"/>
<path d="M5001.8 -3.1L186807.9 31861.4" stroke="#b4b4b9"/>
<path d="M-9741.5 286.0L-238044.7 30472.0" stroke="#b4b4b9"/>
<path d="M5091.6 0.3L193510.3 31883.3" stroke="#b4b4b9"/>
<path d="M-10094.3 303.4L-247897.9 30439.8" stroke="#b4b4b9"/>
<path d="M5183.2 3.7L200212.6 31905.2" stroke="#b4b4b9"/>
<path d="M-10467.0 321.8L-257751.1 30407.5" stroke="#b4b4b9"/>
<path d="M5276.4 7.2L206914.9 31927.1" stroke="#b4b4b9"/>
<path d="M-10861.5 341.3L-267604.3 30375.3" stroke="#b4b4b9"/>
<path d="M5371.4 10.8L213617.2 31949.1" stroke="#b4b4b9"/>
<path d="M-11279.7 362.0L-277457.5 30343.1" stroke="#b4b4b9"/>
<path d="M5468.2 14.5L220319.5 31971.0" stroke="#b4b4b9"/>
<path d="M-11723.8 383.9L-287310.7 30310.9" stroke="#b4b4b9"/>
<path d="M5566.9 18.2L227021.8 31992.9" stroke="#b4b4b9"/>
<path d="M-12196.4 407.2L-297163.9 30278.6" stroke="#b4b4b9"/>
<path d="M5667.5 22.0L233724.2 32014.8" stroke="#b4b4b9"/>
<path d="M-12700.2 432.1L-307017.1 30246.4" stroke="#b4b4b9"/>
<path d="M5770.0 25.8L240426.5 32036.7" stroke="#b4b4b9"/>
<path d="M-13238.4 458.7L-316870.3 30214.2" stroke="#b4b4b9"/></g>
<path d="M500 128 L521 130 C529 130.6 538.5 136 543.4 149.6 L543.4 190 L500 190Z" fill="#e1e3de"/>
<path d="M288 124 L645 158 L645 257 L288 215 C279 214 273 196 273 170 C273 142 279 124 288 124Z" fill="url(#cyl)"/>
<ellipse cx="648.5" cy="207.6" rx="13.6" ry="49.8" transform="rotate(-3 648.5 207.6)" fill="#e6e6e6" stroke="#f6f6f6" stroke-width="1"/>
<path d="M276 174 L640 212" stroke="#dcdcdc" stroke-width=".8" stroke-dasharray="3 2" fill="none"/>
<path d="M519.6 131.4 C528 131.8 537 137 541.8 149.4" stroke="#eceee9" stroke-width="4.6" fill="none"/>
<path d="M521 129.8 C529.6 130.4 538.8 135.8 543.6 149" stroke="#f6f7f3" stroke-width="1.3" fill="none"/>
<path d="M518.6 133.4 C526 134 534.4 139 538.6 149.4" stroke="#cfd1cc" stroke-width="1" fill="none"/>
<path d="M501 240 L548.4 245.8 L546.2 322.5 L500.6 319.5Z" fill="#e0e2dd"/>
<path d="M500.6 319.5 L546.2 322.5 L544.4 386 L500 380Z" fill="#c9ccc6"/>
<path d="M547.4 246.4 L543.6 385" stroke="#eef0eb" stroke-width="1.8" fill="none"/>
<path d="M541.8 246 L538.2 384" stroke="#f0f1ed" stroke-width="1.1" fill="none" opacity=".85"/>
<path d="M502 351.6 L540 357.4 M539.4 358.4 L508 384" stroke="#e6e8e3" stroke-width="1.3" fill="none"/>
<g clip-path="url(#bagclip)">
<rect x="318.0" y="336.0" width="334.0" height="530.0" fill="#f0a226"/>
<polygon points="318.0,284.1 652.0,342.9 652.0,373.8 318.0,310.4" fill="#d43a10" fill-opacity=".34"/>
<polygon points="318.0,341.2 652.0,398.7 652.0,412.9 318.0,359.5" fill="#d43a10" fill-opacity=".34"/>
<polygon points="318.0,398.9 652.0,447.5 652.0,478.4 318.0,425.2" fill="#d43a10" fill-opacity=".34"/>
<polygon points="318.0,462.2 652.0,517.9 652.0,548.8 318.0,488.6" fill="#d43a10" fill-opacity=".34"/>
<polygon points="318.0,525.8 652.0,585.5 652.0,616.3 318.0,552.1" fill="#d43a10" fill-opacity=".34"/>
<polygon points="318.0,589.6 652.0,650.3 652.0,681.1 318.0,615.9" fill="#d43a10" fill-opacity=".34"/>
<polygon points="318.0,653.5 652.0,714.8 652.0,745.6 318.0,679.8" fill="#d43a10" fill-opacity=".34"/>
<polygon points="318.0,717.4 652.0,777.8 652.0,808.6 318.0,743.8" fill="#d43a10" fill-opacity=".34"/>
<polygon points="318.0,782.0 652.0,834.9 652.0,865.8 318.0,808.3" fill="#d43a10" fill-opacity=".34"/>
<polygon points="318.0,846.4 652.0,892.6 652.0,923.4 318.0,872.8" fill="#d43a10" fill-opacity=".34"/>
<rect x="310.9" y="336.0" width="19.9" height="530.0" fill="#cc2c10" fill-opacity=".55"/>
<rect x="355.1" y="336.0" width="21.7" height="530.0" fill="#cc2c10" fill-opacity=".55"/>
<rect x="403.3" y="336.0" width="23.5" height="530.0" fill="#cc2c10" fill-opacity=".55"/>
<rect x="455.5" y="336.0" width="25.3" height="530.0" fill="#cc2c10" fill-opacity=".55"/>
<rect x="511.7" y="336.0" width="27.1" height="530.0" fill="#cc2c10" fill-opacity=".55"/>
<rect x="571.9" y="336.0" width="28.9" height="530.0" fill="#cc2c10" fill-opacity=".55"/>
<rect x="636.1" y="336.0" width="30.7" height="530.0" fill="#cc2c10" fill-opacity=".55"/>
<rect x="704.3" y="336.0" width="32.5" height="530.0" fill="#cc2c10" fill-opacity=".55"/>
<polygon points="310.9,282.8 330.8,286.3 330.8,312.8 310.9,309.0" fill="#c82a12" fill-opacity=".58"/>
<polygon points="355.1,290.6 376.8,294.4 376.8,321.5 355.1,317.4" fill="#c82a12" fill-opacity=".58"/>
<polygon points="403.3,299.1 426.8,303.2 426.8,331.0 403.3,326.6" fill="#c82a12" fill-opacity=".58"/>
<polygon points="455.5,308.3 480.8,312.8 480.8,341.3 455.5,336.5" fill="#c82a12" fill-opacity=".58"/>
<polygon points="511.7,318.2 538.8,323.0 538.8,352.3 511.7,347.1" fill="#c82a12" fill-opacity=".58"/>
<polygon points="571.9,328.8 600.8,333.9 600.8,364.0 571.9,358.6" fill="#c82a12" fill-opacity=".58"/>
<polygon points="636.1,340.1 666.8,345.5 666.8,376.6 636.1,370.7" fill="#c82a12" fill-opacity=".58"/>
<polygon points="704.3,352.1 736.8,357.9 736.8,389.9 704.3,383.7" fill="#c82a12" fill-opacity=".58"/>
<polygon points="310.9,340.0 330.8,343.4 330.8,361.6 310.9,358.4" fill="#c82a12" fill-opacity=".58"/>
<polygon points="355.1,347.6 376.8,351.3 376.8,368.9 355.1,365.5" fill="#c82a12" fill-opacity=".58"/>
<polygon points="403.3,355.9 426.8,359.9 426.8,376.9 403.3,373.2" fill="#c82a12" fill-opacity=".58"/>
<polygon points="455.5,364.8 480.8,369.2 480.8,385.5 455.5,381.5" fill="#c82a12" fill-opacity=".58"/>
<polygon points="511.7,374.5 538.8,379.2 538.8,394.8 511.7,390.5" fill="#c82a12" fill-opacity=".58"/>
<polygon points="571.9,384.9 600.8,389.9 600.8,404.7 571.9,400.1" fill="#c82a12" fill-opacity=".58"/>
<polygon points="636.1,395.9 666.8,401.2 666.8,415.3 636.1,410.4" fill="#c82a12" fill-opacity=".58"/>
<polygon points="704.3,407.7 736.8,413.3 736.8,426.5 704.3,421.3" fill="#c82a12" fill-opacity=".58"/>
<polygon points="310.9,397.9 330.8,400.8 330.8,427.3 310.9,424.1" fill="#c82a12" fill-opacity=".58"/>
<polygon points="355.1,404.3 376.8,407.5 376.8,434.6 355.1,431.1" fill="#c82a12" fill-opacity=".58"/>
<polygon points="403.3,411.3 426.8,414.8 426.8,442.5 403.3,438.8" fill="#c82a12" fill-opacity=".58"/>
<polygon points="455.5,418.9 480.8,422.6 480.8,451.1 455.5,447.1" fill="#c82a12" fill-opacity=".58"/>
<polygon points="511.7,427.1 538.8,431.0 538.8,460.4 511.7,456.0" fill="#c82a12" fill-opacity=".58"/>
<polygon points="571.9,435.9 600.8,440.1 600.8,470.2 571.9,465.6" fill="#c82a12" fill-opacity=".58"/>
<polygon points="636.1,445.2 666.8,449.7 666.8,480.7 636.1,475.8" fill="#c82a12" fill-opacity=".58"/>
<polygon points="704.3,455.1 736.8,459.9 736.8,491.8 704.3,486.7" fill="#c82a12" fill-opacity=".58"/>
<polygon points="310.9,461.0 330.8,464.4 330.8,490.9 310.9,487.3" fill="#c82a12" fill-opacity=".58"/>
<polygon points="355.1,468.4 376.8,472.0 376.8,499.2 355.1,495.2" fill="#c82a12" fill-opacity=".58"/>
<polygon points="403.3,476.5 426.8,480.4 426.8,508.2 403.3,503.9" fill="#c82a12" fill-opacity=".58"/>
<polygon points="455.5,485.2 480.8,489.4 480.8,517.9 455.5,513.3" fill="#c82a12" fill-opacity=".58"/>
<polygon points="511.7,494.5 538.8,499.1 538.8,528.4 511.7,523.5" fill="#c82a12" fill-opacity=".58"/>
<polygon points="571.9,504.6 600.8,509.4 600.8,539.5 571.9,534.3" fill="#c82a12" fill-opacity=".58"/>
<polygon points="636.1,515.3 666.8,520.4 666.8,551.4 636.1,545.9" fill="#c82a12" fill-opacity=".58"/>
<polygon points="704.3,526.7 736.8,532.1 736.8,564.1 704.3,558.2" fill="#c82a12" fill-opacity=".58"/>
<polygon points="310.9,524.5 330.8,528.1 330.8,554.6 310.9,550.8" fill="#c82a12" fill-opacity=".58"/>
<polygon points="355.1,532.4 376.8,536.3 376.8,563.4 355.1,559.2" fill="#c82a12" fill-opacity=".58"/>
<polygon points="403.3,541.0 426.8,545.2 426.8,573.0 403.3,568.5" fill="#c82a12" fill-opacity=".58"/>
<polygon points="455.5,550.4 480.8,554.9 480.8,583.4 455.5,578.5" fill="#c82a12" fill-opacity=".58"/>
<polygon points="511.7,560.4 538.8,565.2 538.8,594.6 511.7,589.3" fill="#c82a12" fill-opacity=".58"/>
<polygon points="571.9,571.2 600.8,576.3 600.8,606.5 571.9,600.9" fill="#c82a12" fill-opacity=".58"/>
<polygon points="636.1,582.6 666.8,588.1 666.8,619.2 636.1,613.3" fill="#c82a12" fill-opacity=".58"/>
<polygon points="704.3,594.8 736.8,600.6 736.8,632.6 704.3,626.4" fill="#c82a12" fill-opacity=".58"/>
<polygon points="310.9,588.3 330.8,591.9 330.8,618.4 310.9,614.6" fill="#c82a12" fill-opacity=".58"/>
<polygon points="355.1,596.4 376.8,600.3 376.8,627.4 355.1,623.2" fill="#c82a12" fill-opacity=".58"/>
<polygon points="403.3,605.1 426.8,609.4 426.8,637.2 403.3,632.6" fill="#c82a12" fill-opacity=".58"/>
<polygon points="455.5,614.6 480.8,619.2 480.8,647.7 455.5,642.8" fill="#c82a12" fill-opacity=".58"/>
<polygon points="511.7,624.8 538.8,629.7 538.8,659.0 511.7,653.7" fill="#c82a12" fill-opacity=".58"/>
<polygon points="571.9,635.7 600.8,641.0 600.8,671.1 571.9,665.5" fill="#c82a12" fill-opacity=".58"/>
<polygon points="636.1,647.4 666.8,652.9 666.8,684.0 636.1,678.0" fill="#c82a12" fill-opacity=".58"/>
<polygon points="704.3,659.8 736.8,665.7 736.8,697.6 704.3,691.3" fill="#c82a12" fill-opacity=".58"/>
<polygon points="310.9,652.2 330.8,655.8 330.8,682.3 310.9,678.4" fill="#c82a12" fill-opacity=".58"/>
<polygon points="355.1,660.3 376.8,664.3 376.8,691.4 355.1,687.1" fill="#c82a12" fill-opacity=".58"/>
<polygon points="403.3,669.1 426.8,673.4 426.8,701.2 403.3,696.6" fill="#c82a12" fill-opacity=".58"/>
<polygon points="455.5,678.7 480.8,683.3 480.8,711.9 455.5,706.9" fill="#c82a12" fill-opacity=".58"/>
<polygon points="511.7,689.0 538.8,694.0 538.8,723.3 511.7,718.0" fill="#c82a12" fill-opacity=".58"/>
<polygon points="571.9,700.1 600.8,705.4 600.8,735.5 571.9,729.8" fill="#c82a12" fill-opacity=".58"/>
<polygon points="636.1,711.9 666.8,717.5 666.8,748.5 636.1,742.5" fill="#c82a12" fill-opacity=".58"/>
<polygon points="704.3,724.4 736.8,730.4 736.8,762.3 704.3,755.9" fill="#c82a12" fill-opacity=".58"/>
<polygon points="310.9,716.2 330.8,719.8 330.8,746.2 310.9,742.4" fill="#c82a12" fill-opacity=".58"/>
<polygon points="355.1,724.1 376.8,728.1 376.8,755.2 355.1,751.0" fill="#c82a12" fill-opacity=".58"/>
<polygon points="403.3,732.9 426.8,737.1 426.8,764.9 403.3,760.3" fill="#c82a12" fill-opacity=".58"/>
<polygon points="455.5,742.3 480.8,746.9 480.8,775.4 455.5,770.5" fill="#c82a12" fill-opacity=".58"/>
<polygon points="511.7,752.4 538.8,757.3 538.8,786.7 511.7,781.4" fill="#c82a12" fill-opacity=".58"/>
<polygon points="571.9,763.3 600.8,768.6 600.8,798.7 571.9,793.1" fill="#c82a12" fill-opacity=".58"/>
<polygon points="636.1,774.9 666.8,780.5 666.8,811.5 636.1,805.6" fill="#c82a12" fill-opacity=".58"/>
<polygon points="704.3,787.3 736.8,793.1 736.8,825.1 704.3,818.8" fill="#c82a12" fill-opacity=".58"/>
<polygon points="310.9,780.8 330.8,784.0 330.8,810.5 310.9,807.1" fill="#c82a12" fill-opacity=".58"/>
<polygon points="355.1,787.8 376.8,791.3 376.8,818.4 355.1,814.7" fill="#c82a12" fill-opacity=".58"/>
<polygon points="403.3,795.5 426.8,799.2 426.8,827.0 403.3,823.0" fill="#c82a12" fill-opacity=".58"/>
<polygon points="455.5,803.8 480.8,807.8 480.8,836.3 455.5,831.9" fill="#c82a12" fill-opacity=".58"/>
<polygon points="511.7,812.7 538.8,817.0 538.8,846.3 511.7,841.6" fill="#c82a12" fill-opacity=".58"/>
<polygon points="571.9,822.2 600.8,826.8 600.8,857.0 571.9,852.0" fill="#c82a12" fill-opacity=".58"/>
<polygon points="636.1,832.4 666.8,837.3 666.8,868.3 636.1,863.0" fill="#c82a12" fill-opacity=".58"/>
<polygon points="704.3,843.2 736.8,848.4 736.8,880.4 704.3,874.8" fill="#c82a12" fill-opacity=".58"/>
<polygon points="310.9,845.5 330.8,848.2 330.8,874.7 310.9,871.7" fill="#c82a12" fill-opacity=".58"/>
<polygon points="355.1,851.6 376.8,854.6 376.8,881.7 355.1,878.4" fill="#c82a12" fill-opacity=".58"/>
<polygon points="403.3,858.2 426.8,861.5 426.8,889.3 403.3,885.7" fill="#c82a12" fill-opacity=".58"/>
<polygon points="455.5,865.4 480.8,868.9 480.8,897.4 455.5,893.6" fill="#c82a12" fill-opacity=".58"/>
<polygon points="511.7,873.2 538.8,876.9 538.8,906.2 511.7,902.1" fill="#c82a12" fill-opacity=".58"/>
<polygon points="571.9,881.5 600.8,885.5 600.8,915.6 571.9,911.3" fill="#c82a12" fill-opacity=".58"/>
<polygon points="636.1,890.4 666.8,894.6 666.8,925.6 636.1,921.0" fill="#c82a12" fill-opacity=".58"/>
<polygon points="704.3,899.8 736.8,904.3 736.8,936.3 704.3,931.3" fill="#c82a12" fill-opacity=".58"/>
<polygon points="318.0,282.6 652.0,341.4 652.0,342.9 318.0,284.1" fill="#a3ac5c" fill-opacity=".55"/>
<polygon points="318.0,310.4 652.0,373.8 652.0,375.3 318.0,311.9" fill="#a3ac5c" fill-opacity=".55"/>
<polygon points="318.0,339.7 652.0,397.2 652.0,398.7 318.0,341.2" fill="#a3ac5c" fill-opacity=".55"/>
<polygon points="318.0,359.5 652.0,412.9 652.0,414.4 318.0,361.0" fill="#a3ac5c" fill-opacity=".55"/>
<polygon points="318.0,397.4 652.0,446.0 652.0,447.5 318.0,398.9" fill="#a3ac5c" fill-opacity=".55"/>
<polygon points="318.0,425.2 652.0,478.4 652.0,479.9 318.0,426.7" fill="#a3ac5c" fill-opacity=".55"/>
<polygon points="318.0,460.7 652.0,516.4 652.0,517.9 318.0,462.2" fill="#a3ac5c" fill-opacity=".55"/>
<polygon points="318.0,488.6 652.0,548.8 652.0,550.3 318.0,490.1" fill="#a3ac5c" fill-opacity=".55"/>
<polygon points="318.0,524.3 652.0,584.0 652.0,585.5 318.0,525.8" fill="#a3ac5c" fill-opacity=".55"/>
<polygon points="318.0,552.1 652.0,616.3 652.0,617.8 318.0,553.6" fill="#a3ac5c" fill-opacity=".55"/>
<polygon points="318.0,588.1 652.0,648.8 652.0,650.3 318.0,589.6" fill="#a3ac5c" fill-opacity=".55"/>
<polygon points="318.0,615.9 652.0,681.1 652.0,682.6 318.0,617.4" fill="#a3ac5c" fill-opacity=".55"/>
<polygon points="318.0,652.0 652.0,713.3 652.0,714.8 318.0,653.5" fill="#a3ac5c" fill-opacity=".55"/>
<polygon points="318.0,679.8 652.0,745.6 652.0,747.1 318.0,681.3" fill="#a3ac5c" fill-opacity=".55"/>
<polygon points="318.0,715.9 652.0,776.3 652.0,777.8 318.0,717.4" fill="#a3ac5c" fill-opacity=".55"/>
<polygon points="318.0,743.8 652.0,808.6 652.0,810.1 318.0,745.3" fill="#a3ac5c" fill-opacity=".55"/>
<polygon points="318.0,780.5 652.0,833.4 652.0,834.9 318.0,782.0" fill="#a3ac5c" fill-opacity=".55"/>
<polygon points="318.0,808.3 652.0,865.8 652.0,867.3 318.0,809.8" fill="#a3ac5c" fill-opacity=".55"/>
<polygon points="318.0,844.9 652.0,891.1 652.0,892.6 318.0,846.4" fill="#a3ac5c" fill-opacity=".55"/>
<polygon points="318.0,872.8 652.0,923.4 652.0,924.9 318.0,874.3" fill="#a3ac5c" fill-opacity=".55"/>
<rect x="309.4" y="336.0" width="1.5" height="530.0" fill="#a3ac5c" fill-opacity=".55"/>
<rect x="330.8" y="336.0" width="1.5" height="530.0" fill="#a3ac5c" fill-opacity=".55"/>
<rect x="353.6" y="336.0" width="1.5" height="530.0" fill="#a3ac5c" fill-opacity=".55"/>
<rect x="376.8" y="336.0" width="1.5" height="530.0" fill="#a3ac5c" fill-opacity=".55"/>
<rect x="401.8" y="336.0" width="1.5" height="530.0" fill="#a3ac5c" fill-opacity=".55"/>
<rect x="426.8" y="336.0" width="1.5" height="530.0" fill="#a3ac5c" fill-opacity=".55"/>
<rect x="454.0" y="336.0" width="1.5" height="530.0" fill="#a3ac5c" fill-opacity=".55"/>
<rect x="480.8" y="336.0" width="1.5" height="530.0" fill="#a3ac5c" fill-opacity=".55"/>
<rect x="510.2" y="336.0" width="1.5" height="530.0" fill="#a3ac5c" fill-opacity=".55"/>
<rect x="538.8" y="336.0" width="1.5" height="530.0" fill="#a3ac5c" fill-opacity=".55"/>
<rect x="570.4" y="336.0" width="1.5" height="530.0" fill="#a3ac5c" fill-opacity=".55"/>
<rect x="600.8" y="336.0" width="1.5" height="530.0" fill="#a3ac5c" fill-opacity=".55"/>
<rect x="634.6" y="336.0" width="1.5" height="530.0" fill="#a3ac5c" fill-opacity=".55"/>
<rect x="666.8" y="336.0" width="1.5" height="530.0" fill="#a3ac5c" fill-opacity=".55"/>
<rect x="702.8" y="336.0" width="1.5" height="530.0" fill="#a3ac5c" fill-opacity=".55"/>
<rect x="736.8" y="336.0" width="1.5" height="530.0" fill="#a3ac5c" fill-opacity=".55"/>
<path d="M329 348 C333 420 338.5 500 338.5 576 C338 650 330 720 327 774" stroke="#cc2c10" stroke-opacity=".55" stroke-width="15" fill="none"/>
<rect x="320" y="335" width="330" height="530" fill="url(#bagsh)"/>
<path d="M385 352 L402 356 L402 452 L500 476 L512 470 L512 372 L516 373 L516 484 L398 458 L390 440Z" fill="#5a1400" opacity=".09"/>
<path d="M398 542 L402 652 L497 672 L506 668 L506 556 L497 554 L497 668 L402 650Z" fill="#5a1400" opacity=".1"/>
</g>
<path d="M636 388 C641 388 645 389 643 394 L641.6 404 L634 411Z" fill="#f09a22"/>
<path d="M632.5 413 C628 432 622.6 462 619.6 494 C616.6 530 615 560 614.6 600 C613.4 650 613 700 613.6 740 C614.4 780 616 808 619.6 835" stroke="#dedede" stroke-width="10" fill="none"/>
<path d="M632.5 413 C628 432 622.6 462 619.6 494 C616.6 530 615 560 614.6 600 C613.4 650 613 700 613.6 740 C614.4 780 616 808 619.6 835" stroke="#f0f0f0" stroke-width="2" fill="none" transform="translate(-4 0)"/>
<path d="M632.5 413 C628 432 622.6 462 619.6 494 C616.6 530 615 560 614.6 600 C613.4 650 613 700 613.6 740 C614.4 780 616 808 619.6 835" stroke="#8c8c8c" stroke-width="3.2" stroke-dasharray="1.1 1.3" fill="none" transform="translate(1.6 0)"/>
<path d="M615 832 L625.4 829 L626.6 838 L617 840Z" fill="#f2f2f2"/>
<path d="M646.4 411 C643 428 639 446 634.6 463" stroke="#e6e6e6" stroke-width="5.4" fill="none"/><path d="M645 415 C642 430 638.4 446 634.4 461" stroke="#9a9a9a" stroke-width="2" stroke-dasharray="1.1 1.3" fill="none"/>
<path d="M642.4 409 L649.6 410 L648.6 416 L642 414Z" fill="#f4f4f4"/>
<path d="M625 463 C625 459.6 634.6 459.6 635.4 463 L635.6 474 C633 477 627.4 477 625 474Z" fill="#f6f6f6"/><path d="M630 462 V474" stroke="#d4d4d4" stroke-width="1"/>
<path d="M628.6 472.6 L636.4 472.6 L641.6 497 C642.6 503 637.6 507.6 632 506 C627.6 504.6 625.6 500 626.6 495Z" fill="#eeec7c"/><ellipse cx="635.4" cy="499.6" rx="2.6" ry="2.2" fill="#f4f3f8" opacity=".85"/><path d="M630.4 474 L632.4 486" stroke="#d6d45a" stroke-width="1"/>
<path d="M429.8 121.2 L521 130 C513 135 507 148 504 166 L502.4 204 L502 270 L501.5 367 L501 476 L400.5 453 L401.7 270 L401.7 204 C402.5 175 406 150 415.8 130.3 C420 124 424 121.5 429.8 121.2Z" fill="url(#strapF)"/>
<path d="M431 124.6 C423 126 419 130 416.6 136 C409 152 406 176 405 204 L404.6 270 L403.6 451.6 M517 133.4 C510.6 139 506 150 503 167 L500.4 204 L499.6 270 L498.6 473" stroke="#f5f6f2" stroke-width="1.5" fill="none" opacity=".95"/>
<path d="M433 126 C426 127.4 421.6 131 419.4 137 C412 153 408.6 177 407.6 204 L407.2 270 L406.2 452 M514.6 134.4 C508.4 140 503.6 151 500.6 168 L498 204 L497.2 270 L496.2 472.6" stroke="#cfd1cc" stroke-width=".8" fill="none" opacity=".9"/>
<g stroke="#f3f4f0" stroke-width="1.5" fill="none"><path d="M405 358.6 L500 371"/><path d="M405.4 360 L498.4 471.4"/><path d="M499.6 372.6 L404.4 450"/><path d="M404 450.4 L498.6 473"/></g>
<g stroke="#cbcdc8" stroke-width=".8" fill="none" opacity=".85"><path d="M405 360.6 L500 373"/><path d="M407.4 360.6 L500 471"/><path d="M500 374.8 L405.6 451.6"/></g>
<path d="M401 539 L497 554.5 L497 670 L401 651.5Z" fill="url(#patchg)"/>
<path d="M402 540.5 L496 555.5 L496 668.5 L402 650.5Z" fill="none" stroke="#f3f4f0" stroke-width="1.3"/>
</svg>
<div style="position:absolute;left:124px;top:75px;width:32px;height:66px;background:#404043;border-radius:8px"></div>
<div style="position:absolute;left:124px;top:148px;width:32px;height:95px;background:#404043;border-radius:8px"></div>
<div style="position:absolute;left:124px;top:250px;width:32px;height:126px;background:#404043;border-radius:8px"></div>
<svg style="position:absolute;left:128px;top:81px" width="24" height="24" viewBox="0 0 24 24"><path d="M12 4.6 L20 8.4 L12 12.4 L4 8.4Z" fill="#d9d9db"/><path d="M4 8.4 L12 12.4 V21 L4 17Z" fill="#a8a8ab"/><path d="M20 8.4 L12 12.4 V21 L20 17Z" fill="#77777a"/><circle cx="5" cy="20" r="1.8" fill="#9a9a9d"/></svg>
<svg style="position:absolute;left:128px;top:112px" width="24" height="24" viewBox="0 0 24 24"><path d="M8 4.6 L4.4 6 L1.6 9.4 L4.2 12 L6 10.8 V20 H18 V10.8 L19.8 12 L22.4 9.4 L19.6 6 L16 4.6 C15 6.8 9 6.8 8 4.6Z" fill="#848487"/><circle cx="12" cy="11.6" r="2.6" fill="none" stroke="#6a6a6d" stroke-width="1"/><circle cx="5" cy="20.4" r="1.8" fill="#9a9a9d"/></svg>
<svg style="position:absolute;left:128px;top:153px" width="24" height="24" viewBox="0 0 24 24"><path d="M8 4.6 L4.4 6 L1.6 9.4 L4.2 12 L6 10.8 V20 H18 V10.8 L19.8 12 L22.4 9.4 L19.6 6 L16 4.6 C15 6.8 9 6.8 8 4.6Z" fill="#fafafa"/></svg>
<svg style="position:absolute;left:128px;top:183px" width="24" height="24" viewBox="0 0 24 24"><circle cx="8.6" cy="11.4" r="4.2" fill="#e6e6e8"/><g fill="#4a4a4d"><circle cx="7.2" cy="10" r=".8"/><circle cx="10" cy="10" r=".8"/><circle cx="7.2" cy="12.8" r=".8"/><circle cx="10" cy="12.8" r=".8"/></g><path d="M10 7.6 L17.6 4.4 L19.2 8" stroke="#e6e6e8" stroke-width="1.2" fill="none"/><path d="M13.6 15.4 L17.6 11 L21 15.4 V21 H13.6Z" fill="#f4f4f4"/></svg>
<svg style="position:absolute;left:128px;top:213px" width="24" height="24" viewBox="0 0 24 24"><circle cx="12" cy="8" r="4.4" fill="#fafafa"/><path d="M3.6 20.6 C4.6 15.6 8 14.4 12 14.4 S19.4 15.6 20.4 20.6Z" fill="#fafafa"/><path d="M8.6 13 h6.8 v3 h-6.8z" fill="#fafafa"/></svg>
<svg style="position:absolute;left:128px;top:255px" width="24" height="24" viewBox="0 0 24 24"><path d="M7 6 L18 3.6 L19.6 16.6 L6.6 18.6 C4.6 14 5 9 7 6Z" fill="#2e8df0"/><path d="M18 3.6 L20.6 4.4 L21 16 L19.6 16.6Z" fill="#1666c4"/><ellipse cx="11" cy="19.4" rx="4.6" ry="1.9" fill="none" stroke="#dfe8f4" stroke-width="1.3"/></svg>
<svg style="position:absolute;left:128px;top:285px" width="24" height="24" viewBox="0 0 24 24"><path d="M8 7 L19 4.6 L17.6 16 L8.6 20 C5.6 16 5.6 10 8 7Z" fill="url(#gfo)"/><defs><linearGradient id="gfo" x1="0" y1="0" x2="1" y2="1"><stop offset="0" stop-color="#1c1c1e"/><stop offset="1" stop-color="#b9b9bc"/></linearGradient></defs><ellipse cx="12.6" cy="18.6" rx="4.6" ry="1.8" fill="#5a5a5d"/></svg>
<svg style="position:absolute;left:128px;top:316px" width="24" height="24" viewBox="0 0 24 24"><path d="M12 3.4 C16 3.4 18 6.6 17.6 10 C17.4 13 16 14.4 15.6 16 L19.6 18.4 V20.6 H4.6 V18.4 L9 16.4 C8.6 15 6.4 13 6.6 9.4 C6.8 6 8.6 3.4 12 3.4Z" fill="#f2d9bd"/><path d="M4.6 18.6 H19.6 V20.6 H4.6Z" fill="#e4a468"/></svg>
<svg style="position:absolute;left:128px;top:345px" width="24" height="24" viewBox="0 0 24 24"><circle cx="12" cy="12" r="8" fill="none" stroke="#e2e2e4" stroke-width="1.2"/><ellipse cx="12" cy="12" rx="3.6" ry="8" fill="none" stroke="#e2e2e4" stroke-width="1"/><path d="M4 12H20M5.2 8H18.8M5.2 16H18.8M12 4V20" stroke="#e2e2e4" stroke-width="1"/></svg>
<!-- 2D window -->
<svg style="position:absolute;left:912px;top:65px" width="579" height="925" viewBox="912 65 579 925">
<defs>
<pattern id="grid2" patternUnits="userSpaceOnUse" x="1101" y="834.5" width="11.1" height="11.1"><rect width="11.1" height="11.1" fill="#c8c8c8"/><path d="M0 .5H11.1M.5 0V11.1" stroke="#bebebe" stroke-width="1"/></pattern>
<pattern id="plaidL" patternUnits="userSpaceOnUse" x="1012.3" y="553.6" width="31.2" height="31.2">
<rect width="31.2" height="31.2" fill="#efa328"/>
<rect x="0" y="0" width="14.0" height="31.2" fill="#dc561a"/>
<rect x="15.6" y="0" width="14.0" height="14.0" fill="#e8791f"/>
<rect x="0" y="0" width="14.0" height="14.0" fill="#d63616"/>
<rect x="14.0" y="0" width="1.6" height="31.2" fill="#b4943c" fill-opacity=".6"/><rect x="29.599999999999998" y="0" width="1.6" height="31.2" fill="#b4943c" fill-opacity=".6"/>
<rect x="0" y="14.0" width="31.2" height="1.6" fill="#b4943c" fill-opacity=".6"/><rect x="0" y="29.599999999999998" width="31.2" height="1.6" fill="#b4943c" fill-opacity=".6"/>
<rect x="14.0" y="14.0" width="1.6" height="1.6" fill="#8faa6c" fill-opacity=".8"/><rect x="29.599999999999998" y="14.0" width="1.6" height="1.6" fill="#8faa6c" fill-opacity=".8"/><rect x="14.0" y="29.599999999999998" width="1.6" height="1.6" fill="#8faa6c" fill-opacity=".8"/><rect x="29.599999999999998" y="29.599999999999998" width="1.6" height="1.6" fill="#8faa6c" fill-opacity=".8"/>
</pattern>
<pattern id="plaidR" href="#plaidL" x="1227.0" y="553.6"/>
</defs>
<rect x="912" y="65" width="579" height="925" fill="url(#grid2)"/>
<rect x="1100.3" y="65" width="1.4" height="925" fill="#8f8f8f"/>
<rect x="912" y="833.8" width="579" height="1.4" fill="#9a9a9a"/>
<rect x="1000" y="446" width="207" height="43" fill="#000" fill-opacity=".055"/>
<rect x="1073.2" y="205.6" width="55.6" height="334.4" fill="#fbfcf3"/>
<g stroke="#ee2f9a" stroke-width="2.6" fill="none"><path d="M1073.2 205.6V540M1128.8 205.6V540"/></g>
<g stroke="#d8408f" stroke-width="1.6" fill="none"><path d="M1073.2 205.6H1128.8M1073.2 255.7H1128.8M1073.2 489.4H1128.8"/><path d="M1073.2 205.6L1128.8 255.7M1128.8 205.6L1073.2 255.7M1073.2 489.4L1128.8 539.6M1128.8 489.4L1073.2 539.6"/></g>
<path d="M1073.2 539.8H1128.8" stroke="#ee2f9a" stroke-width="2.4"/>
<g fill="#cf1280"><circle cx="1073.2" cy="205.6" r="2.6"/><circle cx="1073.2" cy="255.7" r="2.6"/><circle cx="1073.2" cy="489.4" r="2.6"/><circle cx="1073.2" cy="539.6" r="2.6"/><circle cx="1128.8" cy="205.6" r="2.6"/><circle cx="1128.8" cy="255.7" r="2.6"/><circle cx="1128.8" cy="489.4" r="2.6"/><circle cx="1128.8" cy="539.6" r="2.6"/></g>
<path d="M1021.3 557 H1191 V790.5 H1021.3 Q1012.3 790.5 1012.3 781.5 V566 Q1012.3 557 1021.3 557Z" fill="#83b4e0" stroke="#83b4e0" stroke-width="9.4" stroke-linejoin="round"/><path d="M1021.3 557 H1191 V790.5 H1021.3 Q1012.3 790.5 1012.3 781.5 V566 Q1012.3 557 1021.3 557Z" fill="url(#plaidL)"/>
<path d="M1218.5 557 H1387.6 Q1396.6 557 1396.6 566 V781.5 Q1396.6 790.5 1387.6 790.5 H1218.5Z" fill="#83b4e0" stroke="#83b4e0" stroke-width="9.4" stroke-linejoin="round"/><path d="M1218.5 557 H1387.6 Q1396.6 557 1396.6 566 V781.5 Q1396.6 790.5 1387.6 790.5 H1218.5Z" fill="url(#plaidR)"/>
<rect x="1195.8" y="563" width="18" height="222" fill="#c7c7c7"/>
<path d="M1193 674.5H1218" stroke="#6f9fce" stroke-width="1.2"/>
<g stroke="#d0688e" stroke-width="1.1" fill="none" opacity=".9"><path d="M1073 557V607H1128.6V557"/><path d="M1073 702V646H1128.6V702H1073"/></g>
<path d="M1101 557V790" stroke="#c77fb0" stroke-width="1" stroke-dasharray="1.5 2" fill="none"/>
<circle cx="1073" cy="557" r="2.3" fill="#fff" stroke="#b0506f" stroke-width="1"/><circle cx="1073" cy="607" r="2.3" fill="#fff" stroke="#b0506f" stroke-width="1"/><circle cx="1128.6" cy="557" r="2.3" fill="#fff" stroke="#b0506f" stroke-width="1"/><circle cx="1128.6" cy="607" r="2.3" fill="#fff" stroke="#b0506f" stroke-width="1"/>
<circle cx="1073" cy="579" r="2.2" fill="#cf6a86"/><circle cx="1073" cy="646" r="2.2" fill="#cf6a86"/><circle cx="1073" cy="702" r="2.2" fill="#cf6a86"/><circle cx="1128.6" cy="579" r="2.2" fill="#cf6a86"/><circle cx="1128.6" cy="646" r="2.2" fill="#cf6a86"/><circle cx="1128.6" cy="702" r="2.2" fill="#cf6a86"/>
<g stroke="#d0688e" stroke-width="1.1" fill="none" opacity=".9"><path d="M1278.5 557V607H1334.1V557"/><path d="M1278.5 702V646H1334.1V702H1278.5"/></g>
<path d="M1306.5 557V790" stroke="#c77fb0" stroke-width="1" stroke-dasharray="1.5 2" fill="none"/>
<circle cx="1278.5" cy="557" r="2.3" fill="#fff" stroke="#b0506f" stroke-width="1"/><circle cx="1278.5" cy="607" r="2.3" fill="#fff" stroke="#b0506f" stroke-width="1"/><circle cx="1334.1" cy="557" r="2.3" fill="#fff" stroke="#b0506f" stroke-width="1"/><circle cx="1334.1" cy="607" r="2.3" fill="#fff" stroke="#b0506f" stroke-width="1"/>
<circle cx="1278.5" cy="579" r="2.2" fill="#cf6a86"/><circle cx="1278.5" cy="646" r="2.2" fill="#cf6a86"/><circle cx="1278.5" cy="702" r="2.2" fill="#cf6a86"/><circle cx="1334.1" cy="579" r="2.2" fill="#cf6a86"/><circle cx="1334.1" cy="646" r="2.2" fill="#cf6a86"/><circle cx="1334.1" cy="702" r="2.2" fill="#cf6a86"/>
<path d="M1012 674.5H1191M1219 674.5H1397" stroke="#c77fb0" stroke-width="1" stroke-dasharray="1.5 2" fill="none"/>
<g fill="#66686b"><circle cx="1021" cy="557" r="2.5"/><circle cx="1012" cy="566" r="2.5"/><circle cx="1101" cy="557" r="2.5"/><circle cx="1012" cy="674.5" r="2.5"/><circle cx="1012" cy="782" r="2.5"/><circle cx="1021" cy="791" r="2.5"/><circle cx="1101" cy="791" r="2.5"/><circle cx="1388" cy="557" r="2.5"/><circle cx="1397" cy="566" r="2.5"/><circle cx="1306.5" cy="557" r="2.5"/><circle cx="1397" cy="674.5" r="2.5"/><circle cx="1397" cy="782" r="2.5"/><circle cx="1388" cy="791" r="2.5"/><circle cx="1306.5" cy="791" r="2.5"/><circle cx="1191" cy="557" r="2.5"/><circle cx="1191" cy="568.5" r="2.5"/><circle cx="1191" cy="779.5" r="2.5"/><circle cx="1191" cy="791" r="2.5"/><circle cx="1196" cy="557" r="2.5"/><circle cx="1196" cy="568.5" r="2.5"/><circle cx="1196" cy="779.5" r="2.5"/><circle cx="1196" cy="791" r="2.5"/><circle cx="1201" cy="557" r="2.5"/><circle cx="1201" cy="568.5" r="2.5"/><circle cx="1201" cy="779.5" r="2.5"/><circle cx="1201" cy="791" r="2.5"/><circle cx="1208" cy="557" r="2.5"/><circle cx="1208" cy="568.5" r="2.5"/><circle cx="1208" cy="779.5" r="2.5"/><circle cx="1208" cy="791" r="2.5"/><circle cx="1213" cy="557" r="2.5"/><circle cx="1213" cy="568.5" r="2.5"/><circle cx="1213" cy="779.5" r="2.5"/><circle cx="1213" cy="791" r="2.5"/><circle cx="1218" cy="557" r="2.5"/><circle cx="1218" cy="568.5" r="2.5"/><circle cx="1218" cy="779.5" r="2.5"/><circle cx="1218" cy="791" r="2.5"/></g>
<g stroke="#66686b" stroke-width="1.6"><path d="M1191 557V568.5M1191 779.5V791"/><path d="M1201 557V568.5M1201 779.5V791"/><path d="M1208 557V568.5M1208 779.5V791"/><path d="M1218 557V568.5M1218 779.5V791"/></g>
<rect x="1018" y="822" width="54" height="54" fill="#fbfcf3"/>
<path d="M1072 822H1018V876H1072" stroke="#d9428f" stroke-width="2.2" fill="none"/>
<path d="M1072 822V876" stroke="#39f0f5" stroke-width="2.6"/>
<circle cx="1018" cy="822" r="2.6" fill="#b01c6c"/><circle cx="1018" cy="876" r="2.6" fill="#b01c6c"/><circle cx="1072" cy="822" r="3.2" fill="#39f0f5"/><circle cx="1072" cy="876" r="3.2" fill="#39f0f5"/>
</svg>
<span class="t" style="top:837.5px;line-height:16px;font-size:10px;color:#1a1a1a;left:1078px;letter-spacing:0.05px;letter-spacing:-.3px;">48.0</span>
<div style="position:absolute;left:922px;top:73px;width:32px;height:156px;background:#505052;border-radius:7px"></div>
<svg style="position:absolute;left:926px;top:81.5px" width="24" height="24" viewBox="0 0 24 24"><path d="M2.6 18.8 L15.6 6.2 C16.8 5.2 18.6 6.6 17.6 8 Z" fill="#e4e4e6"/><path d="M2.6 18.8 L17 7.6" stroke="#9c9ca0" stroke-width=".7"/><path d="M16.6 6.4 C19.8 5.6 19.6 8.6 20 10.4 S21.8 12.4 21.6 13.4" fill="none" stroke="#3f9bf3" stroke-width="1.5"/></svg>
<svg style="position:absolute;left:926px;top:111.5px" width="24" height="24" viewBox="0 0 24 24"><path d="M8 4.6 L4.4 6 L1.6 9.4 L4.2 12 L6 10.8 V20 H18 V10.8 L19.8 12 L22.4 9.4 L19.6 6 L16 4.6 C15 6.8 9 6.8 8 4.6Z" fill="#fafafa"/></svg>
<svg style="position:absolute;left:926px;top:141.5px" width="24" height="24" viewBox="0 0 24 24"><circle cx="12" cy="12" r="8.4" fill="#eef0fa"/><path d="M12.6 5.6 a1.5 1.5 0 1 1 -.1 0Z M9.6 10.2 h3.8 l-1.4 6.4 h1.6 v1.4 h-4.6 v-1.4 h1.2 l1 -5 h-1.6Z" fill="#2b62d9"/></svg>
<svg style="position:absolute;left:926px;top:171.5px" width="24" height="24" viewBox="0 0 24 24"><path d="M7 6.6 L18.6 4 L17.4 15.6 L6 17.6 C4.6 13.6 5 9.6 7 6.6Z" fill="#2e8df0"/><path d="M5 8 L3.6 16.6 L6 17.6 C5 14 5.4 10 7 6.6Z" fill="#dfe8f4"/><ellipse cx="10" cy="18" rx="4.2" ry="1.7" fill="#9a9a9d"/></svg>
<svg style="position:absolute;left:926px;top:201.5px" width="24" height="24" viewBox="0 0 24 24"><path d="M8 4.6 L4.4 6 L1.6 9.4 L4.2 12 L6 10.8 V20 H18 V10.8 L19.8 12 L22.4 9.4 L19.6 6 L16 4.6 C15 6.8 9 6.8 8 4.6Z" fill="#fafafa"/><rect x="3.4" y="14.6" width="6" height="5" rx=".8" fill="#2e8df0"/><path d="M4.6 14.6 v-1.6 a1.8 1.8 0 0 1 3.6 0 v1.6" fill="none" stroke="#2e8df0" stroke-width="1.2"/></svg>
<!-- right panels -->
<div style="position:absolute;left:1574px;top:63px;width:340px;height:208px;background:#252527;"></div>
<div style="position:absolute;left:1883px;top:63px;width:31px;height:29px;background:#2b2b2d;"></div>
<div style="position:absolute;left:1574px;top:91px;width:309px;height:2px;background:#3a3a3d"></div>
<div style="position:absolute;left:1830px;top:91px;width:34px;height:2px;background:#5aaef7"></div>
<svg style="position:absolute;left:1582px;top:65px" width="20" height="20" viewBox="0 0 20 20"><g fill="#f4f4f4"><rect x="3" y="3.2" width="2.2" height="2.2"/><rect x="6.8" y="3.2" width="10" height="2.2"/><rect x="3" y="7.2" width="2.2" height="2.2"/><rect x="6.8" y="7.2" width="10" height="2.2"/><rect x="3" y="11.2" width="2.2" height="2.2"/><rect x="6.8" y="11.2" width="10" height="2.2"/><rect x="3" y="15.2" width="2.2" height="2.2"/><rect x="6.8" y="15.2" width="10" height="2.2"/></g></svg>
<svg style="position:absolute;left:1614px;top:65px" width="20" height="20" viewBox="0 0 20 20"><path d="M3 6 L6 4.6 V15 L4.6 16.6 Z" fill="#8a8a8d"/><path d="M6.4 3.6 H16.6 C17.8 7 16.8 12 15.6 16.6 H4.8 C6.4 12.6 6.8 8 6.4 3.6Z" fill="#f4f4f4"/></svg>
<svg style="position:absolute;left:1646px;top:65px" width="20" height="20" viewBox="0 0 20 20"><rect x="2.6" y="2.6" width="15" height="15" rx="1" fill="#f4f4f4"/><rect x="3.30" y="6.65" width="3.35" height="3.35" fill="#1c1c1e"/><rect x="3.30" y="13.35" width="3.35" height="3.35" fill="#1c1c1e"/><rect x="6.65" y="3.30" width="3.35" height="3.35" fill="#1c1c1e"/><rect x="6.65" y="10.00" width="3.35" height="3.35" fill="#1c1c1e"/><rect x="10.00" y="6.65" width="3.35" height="3.35" fill="#1c1c1e"/><rect x="10.00" y="13.35" width="3.35" height="3.35" fill="#1c1c1e"/><rect x="13.35" y="3.30" width="3.35" height="3.35" fill="#1c1c1e"/><rect x="13.35" y="10.00" width="3.35" height="3.35" fill="#1c1c1e"/></svg>
<svg style="position:absolute;left:1678px;top:65px" width="20" height="20" viewBox="0 0 20 20"><circle cx="10" cy="10" r="8" fill="#f4f4f4"/><g fill="#252527"><circle cx="7.6" cy="7.6" r="1.5"/><circle cx="12.4" cy="7.6" r="1.5"/><circle cx="7.6" cy="12.4" r="1.5"/><circle cx="12.4" cy="12.4" r="1.5"/></g></svg>
<svg style="position:absolute;left:1710px;top:65px" width="20" height="20" viewBox="0 0 20 20"><circle cx="4.6" cy="10" r="2.3" fill="#f4f4f4"/><rect x="4" y="9.1" width="14" height="1.8" fill="#f4f4f4"/></svg>
<svg style="position:absolute;left:1742px;top:65px" width="20" height="20" viewBox="0 0 20 20"><path d="M2.6 17 L17.6 3" stroke="#f4f4f4" stroke-width="2.2" stroke-linecap="round" stroke-dasharray="3.6 4"/></svg>
<svg style="position:absolute;left:1774px;top:65px" width="20" height="20" viewBox="0 0 20 20"><path d="M3 16.6 C1.6 10 6.6 6.6 7 11.6 C7.2 15.6 4.6 15 6.4 11 C8.4 6 11.6 5.6 11.4 10 C11.2 13.6 9 13 10.6 9.4 C12.6 4.8 15.8 4.4 15.6 8.6 C15.4 11.6 13.6 11 15 8 C16 5.8 17.4 5 18 4.4" fill="none" stroke="#f4f4f4" stroke-width="1.6" stroke-linecap="round"/></svg>
<svg style="position:absolute;left:1806px;top:65px" width="20" height="20" viewBox="0 0 20 20"><path d="M2 3.4 L8.6 6 V10 L2 12.4Z M18 3.4 L11.4 6 V10 L18 12.4Z" fill="#f4f4f4"/><rect x="8.4" y="5.6" width="3.2" height="5" fill="#f4f4f4"/><path d="M9 11 L5.4 18.6 L7.6 18.6 L10 13Z M11 11 L14.6 18.6 L12.4 18.6 L10 13Z" fill="#b9b9bb"/><path d="M4 6.4 l2.6 1.6 l-2.6 1.6z M16 6.4 l-2.6 1.6 l2.6 1.6z" fill="#252527"/></svg>
<svg style="position:absolute;left:1837px;top:65px" width="20" height="20" viewBox="0 0 20 20"><path d="M10 2 C5 2 3.6 5 4.4 8.4 L6.2 16.4 C6.6 18.6 13.4 18.6 13.8 16.4 L15.6 8.4 C16.4 5 15 2 10 2Z" fill="#5aaef7"/><rect x="8.7" y="4" width="2.6" height="8.6" rx="1.3" fill="#252527"/><rect x="7.6" y="13.8" width="4.8" height="2.6" rx="1.2" fill="#252527"/></svg>
<svg style="position:absolute;left:1869px;top:65px" width="14" height="20" viewBox="0 0 14 20"><path d="M2 8 L6 4 H14 V18 H2Z" fill="#f4f4f4"/><path d="M9 4 V18" stroke="#252527" stroke-width="1.4"/><path d="M11 2.6 h3 M11 9 h3" stroke="#cfcfd1" stroke-width="1"/></svg>
<svg style="position:absolute;left:1887px;top:73px" width="8" height="10" viewBox="0 0 8 10"><path d="M7 1 V9 L1 5z" fill="#47474a"/></svg>
<svg style="position:absolute;left:1902px;top:73px" width="8" height="10" viewBox="0 0 8 10"><path d="M1 1 V9 L7 5z" fill="#f2f2f2"/></svg>
<svg style="position:absolute;left:1727px;top:115px" width="11" height="11" viewBox="0 0 11 11"><path d="M5.5 1v9M1 5.5h9" stroke="#f2f2f2" stroke-width="1.5"/></svg>
<span class="t" style="top:111.0px;line-height:19px;font-size:13px;color:#f2f2f2;left:1743px;letter-spacing:-0.67px;">Add</span>
<svg style="position:absolute;left:1786px;top:113px" width="12" height="12" viewBox="0 0 12 12"><rect x="3.6" y="1" width="7" height="6.4" rx="1" fill="none" stroke="#4c4c4f" stroke-width="1.1"/><rect x="1" y="3.4" width="7" height="6.4" rx="1" fill="#252527" stroke="#4c4c4f" stroke-width="1.1"/></svg>
<span class="t" style="top:111.0px;line-height:19px;font-size:13px;color:#4e4e51;left:1802px;letter-spacing:-0.50px;">Copy</span>
<svg style="position:absolute;left:1851px;top:113px" width="13" height="13" viewBox="0 0 13 13"><rect x="1" y="4.4" width="7.6" height="7" rx=".8" fill="#e8e8e8"/><path d="M3 10 h3.6 M4.8 6 v4 M3.4 8.6 h2.8" stroke="#252527" stroke-width="1"/><path d="M10 .6 v4.6 M7.7 2.9 h4.6" stroke="#f2f2f2" stroke-width="1.4"/></svg>
<span class="t" style="top:111.0px;line-height:19px;font-size:13px;color:#f2f2f2;left:1868px;letter-spacing:-0.67px;">Assign</span>
<div style="position:absolute;left:1584px;top:138px;width:322px;height:1px;background:#343437"></div>
<div style="position:absolute;left:1586px;top:141px;width:326px;height:62px;background:#2f3443;"></div>
<svg style="position:absolute;left:1590px;top:167px" width="13" height="12" viewBox="0 0 13 12"><path d="M1.4 6.2 L4.8 9.4 L11.2 2" fill="none" stroke="#4aa3f7" stroke-width="2"/></svg>
<svg style="position:absolute;left:1618px;top:146px" width="19" height="54" viewBox="0 0 19 54"><rect width="19" height="54" fill="#d4d4d4"/>
<path d="M9.5 1 C6 1 4.4 3.4 4.6 7 L4.6 20 L3 30 L3 36 C3 40 16 40 16 36 L16 30 L14.4 20 L14.4 7 C14.6 3.4 13 1 9.5 1Z" fill="#fafafa"/>
<rect x="6.6" y="3.6" width="5.8" height="9" rx="2.9" fill="#e4e4e4"/><rect x="6" y="15" width="7" height="5" fill="#bdbdbd"/><path d="M6 16.4h7M6 18h7" stroke="#7a7a7a" stroke-width=".7"/>
<ellipse cx="9.5" cy="36" rx="6.4" ry="2.4" fill="none" stroke="#cfcfcf" stroke-width="1"/><rect x="7" y="35" width="5" height="13" fill="#c9c9c9"/><path d="M7 37h5M7 39h5M7 41h5M7 43h5M7 45h5" stroke="#6f6f6f" stroke-width=".8"/><rect x="7.6" y="48" width="3.8" height="6" fill="#fafafa"/></svg>
<span class="t" style="top:165.0px;line-height:19px;font-size:13px;color:#5aa9f2;left:1654px;letter-spacing:-0.25px;">Zipper 1</span>
<div style="position:absolute;left:1574px;top:296px;width:340px;height:696px;background:#252527;"></div>
<div style="position:absolute;left:1904px;top:296px;width:10px;height:696px;background:#0f0f10;"></div>
<div style="position:absolute;left:1905.5px;top:299px;width:7px;height:510px;background:#59595b;border-radius:3.5px"></div>
<span class="t" style="top:299.0px;line-height:19px;font-size:13px;color:#e6e6e6;left:1601px;"><span style="letter-spacing:1.00px">풀러</span></span>
<svg style="position:absolute;left:1858px;top:301px" width="15" height="14" viewBox="0 0 15 14"><path d="M1 3 a1.4 1.4 0 0 1 1.4 -1.4 H5.6 L7 3 H12 a1.4 1.4 0 0 1 1.4 1.4 V5 H1Z" fill="#f0f0f0"/><path d="M.6 5.6 H14.4 L13.4 12 a1 1 0 0 1 -1 .8 H2.6 a1 1 0 0 1 -1 -.8Z" fill="#f0f0f0"/></svg>
<svg style="position:absolute;left:1880px;top:301px" width="14" height="14" viewBox="0 0 14 14"><path d="M1 2 a1 1 0 0 1 1 -1 H12 a1 1 0 0 1 1 1 V12 a1 1 0 0 1 -1 1 H2 a1 1 0 0 1 -1 -1Z" fill="#f0f0f0"/><rect x="3.4" y="1" width="7" height="4.6" fill="#252527"/><rect x="7.6" y="1.6" width="1.8" height="3.2" fill="#f0f0f0"/></svg>
<div style="position:absolute;left:1601px;top:319px;width:297px;height:1px;background:#38383b"></div>
<svg style="position:absolute;left:1585.5px;top:325.5px" width="10.0" height="8.0" viewBox="0 0 10 8"><path d="M.8 .8h8.4L5 7.4z" fill="#f0f0f0"/></svg>
<span class="t" style="top:320.8px;line-height:19px;font-size:13px;color:#5aa9f2;left:1601px;letter-spacing:-0.29px;">Specification (Selected)</span>
<div style="position:absolute;left:1601px;top:339px;width:297px;height:1px;background:#38383b"></div>
<span class="t" style="top:344.0px;line-height:19px;font-size:13px;color:#e6e6e6;left:1620px;"><span style="letter-spacing:1.00px">크기</span> (%)</span>
<div style="position:absolute;left:1806px;top:341px;width:83px;height:22px;background:#1a1a1c;border-radius:4px"></div><span class="t" style="top:343.0px;line-height:19px;font-size:13px;color:#f2f2f2;left:1814px;letter-spacing:-0.25px;">100.00</span>
<div style="position:absolute;left:1620px;top:365px;width:273px;height:1px;background:#38383b"></div>
<span class="t" style="top:370.0px;line-height:19px;font-size:13px;color:#e6e6e6;left:1620px;"><span style="letter-spacing:1.00px">무게</span> (g)</span>
<div style="position:absolute;left:1806px;top:367.5px;width:83px;height:21.5px;background:#1a1a1c;border-radius:4px"></div><span class="t" style="top:369.2px;line-height:19px;font-size:13px;color:#f2f2f2;left:1814px;letter-spacing:-0.25px;">0.24</span>
<div style="position:absolute;left:1620px;top:391px;width:273px;height:1px;background:#38383b"></div>
<svg style="position:absolute;left:1586.5px;top:399.5px" width="8" height="10" viewBox="0 0 8 10"><path d="M.8 .8v8.4L7.4 5z" fill="#d8d8d8"/></svg>
<span class="t" style="top:395.5px;line-height:19px;font-size:13px;color:#48484b;left:1601px;"><span style="letter-spacing:1.00px">잠그기</span></span>
<div style="position:absolute;left:1792px;top:399px;width:11.5px;height:11.5px;background:#434346;border-radius:2.5px"></div>
<svg style="position:absolute;left:1793px;top:400px" width="10" height="10" viewBox="0 0 10 10"><path d="M1.8 5.2 L4 7.4 L8.2 2.6" fill="none" stroke="#2a2a2c" stroke-width="1.6"/></svg>
<span class="t" style="top:396.0px;line-height:19px;font-size:13px;color:#48484b;left:1811px;letter-spacing:-1.00px;">On</span>
<div style="position:absolute;left:1601px;top:417px;width:297px;height:1px;background:#38383b"></div>
<svg style="position:absolute;left:1585.5px;top:426.5px" width="10.0" height="8.0" viewBox="0 0 10 8"><path d="M.8 .8h8.4L5 7.4z" fill="#f0f0f0"/></svg>
<span class="t" style="top:422.0px;line-height:19px;font-size:13px;color:#5aa9f2;left:1601px;"><span style="letter-spacing:1.00px">재질</span> (<span style="letter-spacing:1.00px">선택</span>)</span>
<div style="position:absolute;left:1788px;top:418.5px;width:110px;height:24.5px;background:#1a1a1c;border-radius:4px"></div><span class="t" style="top:422.2px;line-height:19px;font-size:13px;color:#f2f2f2;left:1794px;letter-spacing:-1.20px;">PBR</span><svg style="position:absolute;left:1883.0px;top:427.05px" width="8.0" height="6.4" viewBox="0 0 10 8"><path d="M.8 .8h8.4L5 7.4z" fill="#e8e8e8"/></svg>
<div style="position:absolute;left:1601px;top:444px;width:297px;height:1px;background:#38383b"></div>
<span class="t" style="top:449.0px;line-height:19px;font-size:13px;color:#e6e6e6;left:1620px;"><span style="letter-spacing:1.00px">종류</span></span>
<div style="position:absolute;left:1743px;top:446px;width:155px;height:24px;background:#1a1a1c;border-radius:4px"></div><span class="t" style="top:449.5px;line-height:19px;font-size:13px;color:#f2f2f2;left:1749px;letter-spacing:-0.04px;">Fabric_Matte</span><svg style="position:absolute;left:1883.0px;top:454.3px" width="8.0" height="6.4" viewBox="0 0 10 8"><path d="M.8 .8h8.4L5 7.4z" fill="#e8e8e8"/></svg>
<div style="position:absolute;left:1620px;top:471px;width:278px;height:1px;background:#38383b"></div>
<svg style="position:absolute;left:1604.5px;top:477.5px" width="10.0" height="8.0" viewBox="0 0 10 8"><path d="M.8 .8h8.4L5 7.4z" fill="#f0f0f0"/></svg>
<span class="t" style="top:473.0px;line-height:19px;font-size:13px;color:#e6e6e6;left:1620px;letter-spacing:-0.30px;">Base Color</span>
<div style="position:absolute;left:1620px;top:491px;width:278px;height:1px;background:#38383b"></div>
<span class="t" style="top:497.0px;line-height:19px;font-size:13px;color:#e6e6e6;left:1640px;"><span style="letter-spacing:1.00px">색상</span></span>
<div style="position:absolute;left:1791px;top:494.5px;width:83px;height:21.0px;background:#1a1a1c;border-radius:4px"></div><span class="t" style="top:496.0px;line-height:19px;font-size:13px;color:#f2f2f2;left:1799px;letter-spacing:-1.08px;">FFFFFF</span>
<div style="position:absolute;left:1873.5px;top:495px;width:19.5px;height:19px;background:#ffffff;"></div>
<div style="position:absolute;left:1640px;top:519px;width:253px;height:1px;background:#38383b"></div>
<svg style="position:absolute;left:1623.5px;top:530.0px" width="10.0" height="8.0" viewBox="0 0 10 8"><path d="M.8 .8h8.4L5 7.4z" fill="#f0f0f0"/></svg>
<span class="t" style="top:526.0px;line-height:19px;font-size:13px;color:#e6e6e6;left:1640px;letter-spacing:-0.36px;">Base Color Map</span>
<div style="position:absolute;left:1795px;top:521px;width:25px;height:25px;background:#fdfdfd;"></div>
<svg style="position:absolute;left:1839px;top:529px" width="10" height="10" viewBox="0 0 10 10"><g fill="#ececec"><rect x="0" y="0" width="4.2" height="4.2" rx=".6"/><rect x="5.6" y="0" width="4.2" height="4.2" rx=".6"/><rect x="0" y="5.6" width="4.2" height="4.2" rx=".6"/><rect x="5.6" y="5.6" width="4.2" height="4.2" rx=".6"/></g></svg>
<svg style="position:absolute;left:1858px;top:527px" width="12" height="13" viewBox="0 0 12 13"><path d="M1 2.2 L11 3.4" stroke="#dcdcdc" stroke-width="1.1"/><path d="M2 4.4 H10 L9.2 12 H2.8Z" fill="none" stroke="#dcdcdc" stroke-width="1.1"/><rect x="3.8" y="7" width="4.4" height="3.6" fill="#9a9a9c"/></svg>
<svg style="position:absolute;left:1878px;top:532px" width="12" height="4" viewBox="0 0 12 4"><g fill="#ececec"><circle cx="1.8" cy="2" r="1.4"/><circle cx="6" cy="2" r="1.4"/><circle cx="10.2" cy="2" r="1.4"/></g></svg>
<div style="position:absolute;left:1640px;top:548px;width:253px;height:1px;background:#38383b"></div>
<span class="t" style="top:553.0px;line-height:19px;font-size:13px;color:#e6e6e6;left:1658px;letter-spacing:-0.14px;">Recolor</span>
<svg style="position:absolute;left:1728px;top:556px" width="12" height="12" viewBox="0 0 12 12"><path d="M6 1.6 C8 4 9.6 5.6 9.6 7.6 A3.6 3.6 0 0 1 2.4 7.6 C2.4 5.6 4 4 6 1.6Z" fill="none" stroke="#d0d0d0" stroke-width="1.1"/><path d="M1.4 1.6 L10.6 10.6" stroke="#d0d0d0" stroke-width="1.1"/></svg>
<span class="t" style="top:553.5px;line-height:19px;font-size:13px;color:#e6e6e6;left:1745px;">Desaturate</span>
<svg style="position:absolute;left:1824px;top:556px" width="13" height="12" viewBox="0 0 13 12"><path d="M2 5.6 L6.4 1.4 L11 5.6 L6.4 10Z" fill="none" stroke="#d0d0d0" stroke-width="1.1"/><path d="M2.4 6 H10.6 L6.4 10Z" fill="#d0d0d0"/><path d="M11.6 7.6 c.8 1.2 .9 2 0 2.6 c-.9 -.6 -.8 -1.4 0 -2.6z" fill="#d0d0d0"/></svg>
<span class="t" style="top:553.5px;line-height:19px;font-size:13px;color:#e6e6e6;left:1841.5px;letter-spacing:-0.17px;">Switch</span>
<div style="position:absolute;left:1658px;top:575px;width:230px;height:1px;background:#38383b"></div>
<svg style="position:absolute;left:1643px;top:581px" width="8" height="10" viewBox="0 0 8 10"><path d="M.8 .8v8.4L7.4 5z" fill="#f0f0f0"/></svg>
<span class="t" style="top:577.0px;line-height:19px;font-size:13px;color:#e6e6e6;left:1658px;"><span style="letter-spacing:1.00px">변환</span></span>
<svg style="position:absolute;left:1872px;top:578px" width="14" height="14" viewBox="0 0 14 14"><path d="M11.6 8.2 A5 5 0 1 1 9.6 3.2" fill="none" stroke="#ececec" stroke-width="1.4" stroke-linecap="round"/><path d="M8.4 1 L12.2 1.6 L11 5.4" fill="none" stroke="#ececec" stroke-width="1.4" stroke-linecap="round" stroke-linejoin="round"/></svg>
<div style="position:absolute;left:1658px;top:595px;width:230px;height:1px;background:#38383b"></div>
<svg style="position:absolute;left:1604.5px;top:605.5px" width="10.0" height="8.0" viewBox="0 0 10 8"><path d="M.8 .8h8.4L5 7.4z" fill="#f0f0f0"/></svg>
<span class="t" style="top:601.0px;line-height:19px;font-size:13px;color:#e6e6e6;left:1620px;"><span style="letter-spacing:1.00px">노말맵</span></span>
<svg style="position:absolute;left:1844px;top:605px" width="10" height="10" viewBox="0 0 10 10"><g fill="#ececec"><rect x="0" y="0" width="4.2" height="4.2" rx=".6"/><rect x="5.6" y="0" width="4.2" height="4.2" rx=".6"/><rect x="0" y="5.6" width="4.2" height="4.2" rx=".6"/><rect x="5.6" y="5.6" width="4.2" height="4.2" rx=".6"/></g></svg>
<svg style="position:absolute;left:1863.5px;top:604px" width="12" height="12" viewBox="0 0 12 12"><path d="M.6 11.4 L4.6 6.4 L7.2 9.6 L8.6 8 L11.4 11.4Z" fill="#c4c4c6"/><circle cx="9.4" cy="2.6" r="1.7" fill="#c4c4c6"/><path d="M3.4 .4 l.8 2 2 .8 -2 .8 -.8 2 -.8 -2 -2 -.8 2 -.8z" fill="#4c8df6"/><path d="M6.8 5 l.45 1 1 .45 -1 .45 -.45 1 -.45 -1 -1 -.45 1 -.45z" fill="#4c8df6"/></svg>
<svg style="position:absolute;left:1883px;top:608px" width="12" height="4" viewBox="0 0 12 4"><g fill="#ececec"><circle cx="1.8" cy="2" r="1.4"/><circle cx="6" cy="2" r="1.4"/><circle cx="10.2" cy="2" r="1.4"/></g></svg>
<div style="position:absolute;left:1620px;top:624px;width:278px;height:1px;background:#38383b"></div>
<span class="t" style="top:638.0px;line-height:19px;font-size:13px;color:#e6e6e6;left:1640px;"><span style="letter-spacing:1.00px">강도</span></span>
<div style="position:absolute;left:1804px;top:625.5px;width:81px;height:21.0px;background:#1a1a1c;border-radius:4px"></div><span class="t" style="top:627.0px;line-height:19px;font-size:13px;color:#f2f2f2;left:1812px;">0</span>
<div style="position:absolute;left:1803px;top:656px;width:84px;height:4px;background:#5c5c5e;border-radius:2px"></div><div style="position:absolute;left:1803px;top:656px;width:42.5px;height:4px;background:#b9b9bb;border-radius:2px"></div><div style="position:absolute;left:1841.0px;top:653.5px;width:9px;height:9px;background:#f6f6f6;border-radius:50%"></div>
<div style="position:absolute;left:1640px;top:669px;width:253px;height:1px;background:#38383b"></div>
<svg style="position:absolute;left:1604.5px;top:680.0px" width="10.0" height="8.0" viewBox="0 0 10 8"><path d="M.8 .8h8.4L5 7.4z" fill="#f0f0f0"/></svg>
<span class="t" style="top:676.0px;line-height:19px;font-size:13px;color:#e6e6e6;left:1620px;"><span style="letter-spacing:1.00px">디스플레이스먼트</span> <span style="letter-spacing:1.00px">맵</span></span>
<svg style="position:absolute;left:1844px;top:679px" width="10" height="10" viewBox="0 0 10 10"><g fill="#ececec"><rect x="0" y="0" width="4.2" height="4.2" rx=".6"/><rect x="5.6" y="0" width="4.2" height="4.2" rx=".6"/><rect x="0" y="5.6" width="4.2" height="4.2" rx=".6"/><rect x="5.6" y="5.6" width="4.2" height="4.2" rx=".6"/></g></svg>
<svg style="position:absolute;left:1863.5px;top:678px" width="12" height="12" viewBox="0 0 12 12"><path d="M.6 11.4 L4.6 6.4 L7.2 9.6 L8.6 8 L11.4 11.4Z" fill="#c4c4c6"/><circle cx="9.4" cy="2.6" r="1.7" fill="#c4c4c6"/><path d="M3.4 .4 l.8 2 2 .8 -2 .8 -.8 2 -.8 -2 -2 -.8 2 -.8z" fill="#4c8df6"/><path d="M6.8 5 l.45 1 1 .45 -1 .45 -.45 1 -.45 -1 -1 -.45 1 -.45z" fill="#4c8df6"/></svg>
<svg style="position:absolute;left:1883px;top:682px" width="12" height="4" viewBox="0 0 12 4"><g fill="#ececec"><circle cx="1.8" cy="2" r="1.4"/><circle cx="6" cy="2" r="1.4"/><circle cx="10.2" cy="2" r="1.4"/></g></svg>
<div style="position:absolute;left:1620px;top:698px;width:278px;height:1px;background:#38383b"></div>
<span class="t" style="top:703.3px;line-height:19px;font-size:13px;color:#e6e6e6;left:1640px;"><span style="letter-spacing:1.00px">높이</span> (mm)</span>
<div style="position:absolute;left:1806px;top:700.3px;width:83px;height:21.200000000000045px;background:#1a1a1c;border-radius:4px"></div><span class="t" style="top:701.9px;line-height:19px;font-size:13px;color:#f2f2f2;left:1814px;letter-spacing:-0.25px;">0.00</span>
<div style="position:absolute;left:1640px;top:724px;width:253px;height:1px;background:#38383b"></div>
<span class="t" style="top:729.3px;line-height:19px;font-size:13px;color:#e6e6e6;left:1640px;"><span style="letter-spacing:1.00px">이동</span> (mm)</span>
<div style="position:absolute;left:1806px;top:726.3px;width:83px;height:21.200000000000045px;background:#1a1a1c;border-radius:4px"></div><span class="t" style="top:727.9px;line-height:19px;font-size:13px;color:#f2f2f2;left:1814px;letter-spacing:-0.25px;">0.00</span>
<div style="position:absolute;left:1640px;top:750px;width:253px;height:1px;background:#38383b"></div>
<span class="t" style="top:755.3px;line-height:19px;font-size:13px;color:#e6e6e6;left:1640px;"><span style="letter-spacing:1.00px">절단</span> <span style="letter-spacing:1.00px">높이</span> (mm)</span>
<div style="position:absolute;left:1806px;top:752.3px;width:83px;height:21.200000000000045px;background:#1a1a1c;border-radius:4px"></div><span class="t" style="top:753.9px;line-height:19px;font-size:13px;color:#f2f2f2;left:1814px;letter-spacing:-0.25px;">0.00</span>
<div style="position:absolute;left:1640px;top:776px;width:253px;height:1px;background:#38383b"></div>
<span class="t" style="top:781.3px;line-height:19px;font-size:13px;color:#e6e6e6;left:1640px;"><span style="letter-spacing:1.00px">입자</span> <span style="letter-spacing:1.00px">간격</span> (mm)</span>
<div style="position:absolute;left:1806px;top:778.3px;width:83px;height:21.200000000000045px;background:#1a1a1c;border-radius:4px"></div><span class="t" style="top:779.9px;line-height:19px;font-size:13px;color:#f2f2f2;left:1814px;letter-spacing:-0.25px;">4.00</span>
<div style="position:absolute;left:1640px;top:802px;width:253px;height:1px;background:#38383b"></div>
<span class="t" style="top:807.0px;line-height:19px;font-size:13px;color:#e6e6e6;left:1640px;"><span style="letter-spacing:1.00px">경계면</span> <span style="letter-spacing:1.00px">연장</span></span>
<div style="position:absolute;left:1787.5px;top:809.5px;width:11px;height:11px;background:#3a3a3d;border-radius:3px;box-shadow:inset 0 0 0 1px #8e8e91"></div>
<span class="t" style="top:807.0px;line-height:19px;font-size:13px;color:#e6e6e6;left:1805.5px;letter-spacing:-0.67px;">Off</span>
<div style="position:absolute;left:1640px;top:828px;width:253px;height:1px;background:#38383b"></div>
<svg style="position:absolute;left:1604.5px;top:834.5px" width="10.0" height="8.0" viewBox="0 0 10 8"><path d="M.8 .8h8.4L5 7.4z" fill="#f0f0f0"/></svg>
<span class="t" style="top:830.0px;line-height:19px;font-size:13px;color:#e6e6e6;left:1620px;"><span style="letter-spacing:1.00px">불투명도</span></span>
<div style="position:absolute;left:1620px;top:848px;width:278px;height:1px;background:#38383b"></div>
<span class="t" style="top:862.0px;line-height:19px;font-size:13px;color:#e6e6e6;left:1640px;"><span style="letter-spacing:1.00px">불투명도</span></span>
<div style="position:absolute;left:1804px;top:850px;width:81px;height:21px;background:#1a1a1c;border-radius:4px"></div><span class="t" style="top:851.5px;line-height:19px;font-size:13px;color:#f2f2f2;left:1812px;letter-spacing:-0.33px;">100</span>
<div style="position:absolute;left:1803px;top:880px;width:84px;height:4px;background:#5c5c5e;border-radius:2px"></div><div style="position:absolute;left:1803px;top:880px;width:78.5px;height:4px;background:#b9b9bb;border-radius:2px"></div><div style="position:absolute;left:1877.0px;top:877.5px;width:9px;height:9px;background:#f6f6f6;border-radius:50%"></div>
<div style="position:absolute;left:1640px;top:893px;width:253px;height:1px;background:#38383b"></div>
<svg style="position:absolute;left:1623.5px;top:903.5px" width="10.0" height="8.0" viewBox="0 0 10 8"><path d="M.8 .8h8.4L5 7.4z" fill="#f0f0f0"/></svg>
<span class="t" style="top:899.5px;line-height:19px;font-size:13px;color:#e6e6e6;left:1640px;"><span style="letter-spacing:1.00px">투명</span> <span style="letter-spacing:1.00px">맵</span></span>
<svg style="position:absolute;left:1839px;top:903px" width="10" height="10" viewBox="0 0 10 10"><g fill="#ececec"><rect x="0" y="0" width="4.2" height="4.2" rx=".6"/><rect x="5.6" y="0" width="4.2" height="4.2" rx=".6"/><rect x="0" y="5.6" width="4.2" height="4.2" rx=".6"/><rect x="5.6" y="5.6" width="4.2" height="4.2" rx=".6"/></g></svg>
<svg style="position:absolute;left:1858px;top:902px" width="12" height="12" viewBox="0 0 12 12"><path d="M.6 11.4 L4.6 6.4 L7.2 9.6 L8.6 8 L11.4 11.4Z" fill="#c4c4c6"/><circle cx="9.4" cy="2.6" r="1.7" fill="#c4c4c6"/><path d="M3.4 .4 l.8 2 2 .8 -2 .8 -.8 2 -.8 -2 -2 -.8 2 -.8z" fill="#4c8df6"/><path d="M6.8 5 l.45 1 1 .45 -1 .45 -.45 1 -.45 -1 -1 -.45 1 -.45z" fill="#4c8df6"/></svg>
<svg style="position:absolute;left:1878px;top:906px" width="12" height="4" viewBox="0 0 12 4"><g fill="#ececec"><circle cx="1.8" cy="2" r="1.4"/><circle cx="6" cy="2" r="1.4"/><circle cx="10.2" cy="2" r="1.4"/></g></svg>
<div style="position:absolute;left:1640px;top:922px;width:253px;height:1px;background:#38383b"></div>
<span class="t" style="top:927.0px;line-height:19px;font-size:13px;color:#e6e6e6;left:1658px;"><span style="letter-spacing:1.00px">모드</span></span>
<div style="position:absolute;left:1772px;top:923.5px;width:116px;height:25.0px;background:#1a1a1c;border-radius:4px"></div><span class="t" style="top:927.5px;line-height:19px;font-size:13px;color:#f2f2f2;left:1778px;letter-spacing:-1.20px;">RGB</span><svg style="position:absolute;left:1873.0px;top:932.3px" width="8.0" height="6.4" viewBox="0 0 10 8"><path d="M.8 .8h8.4L5 7.4z" fill="#e8e8e8"/></svg>
<div style="position:absolute;left:1658px;top:949px;width:230px;height:1px;background:#38383b"></div>
<svg style="position:absolute;left:1604.5px;top:955.0px" width="10.0" height="8.0" viewBox="0 0 10 8"><path d="M.8 .8h8.4L5 7.4z" fill="#f0f0f0"/></svg>
<span class="t" style="top:951.0px;line-height:19px;font-size:13px;color:#e6e6e6;left:1620px;"><span style="letter-spacing:1.00px">반사</span></span>
<div style="position:absolute;left:1620px;top:969px;width:278px;height:1px;background:#38383b"></div>
<svg style="position:absolute;left:1623.5px;top:978.0px" width="10.0" height="8.0" viewBox="0 0 10 8"><path d="M.8 .8h8.4L5 7.4z" fill="#f0f0f0"/></svg>
<span class="t" style="top:974.0px;line-height:19px;font-size:13px;color:#e6e6e6;left:1640px;"><span style="letter-spacing:1.00px">표면</span> <span style="letter-spacing:1.00px">거칠기</span></span>
<div style="position:absolute;left:1777px;top:970.5px;width:116px;height:21.5px;background:#1a1a1c;border-radius:4px 4px 0 0"></div>
<span class="t" style="top:974.5px;line-height:19px;font-size:13px;color:#f2f2f2;left:1783.5px;"><span style="letter-spacing:1.00px">강도</span></span>
<svg style="position:absolute;left:1877.0px;top:978.0px" width="10.0" height="8.0" viewBox="0 0 10 8"><path d="M.8 .8h8.4L5 7.4z" fill="#e8e8e8"/></svg>
</body></html>
